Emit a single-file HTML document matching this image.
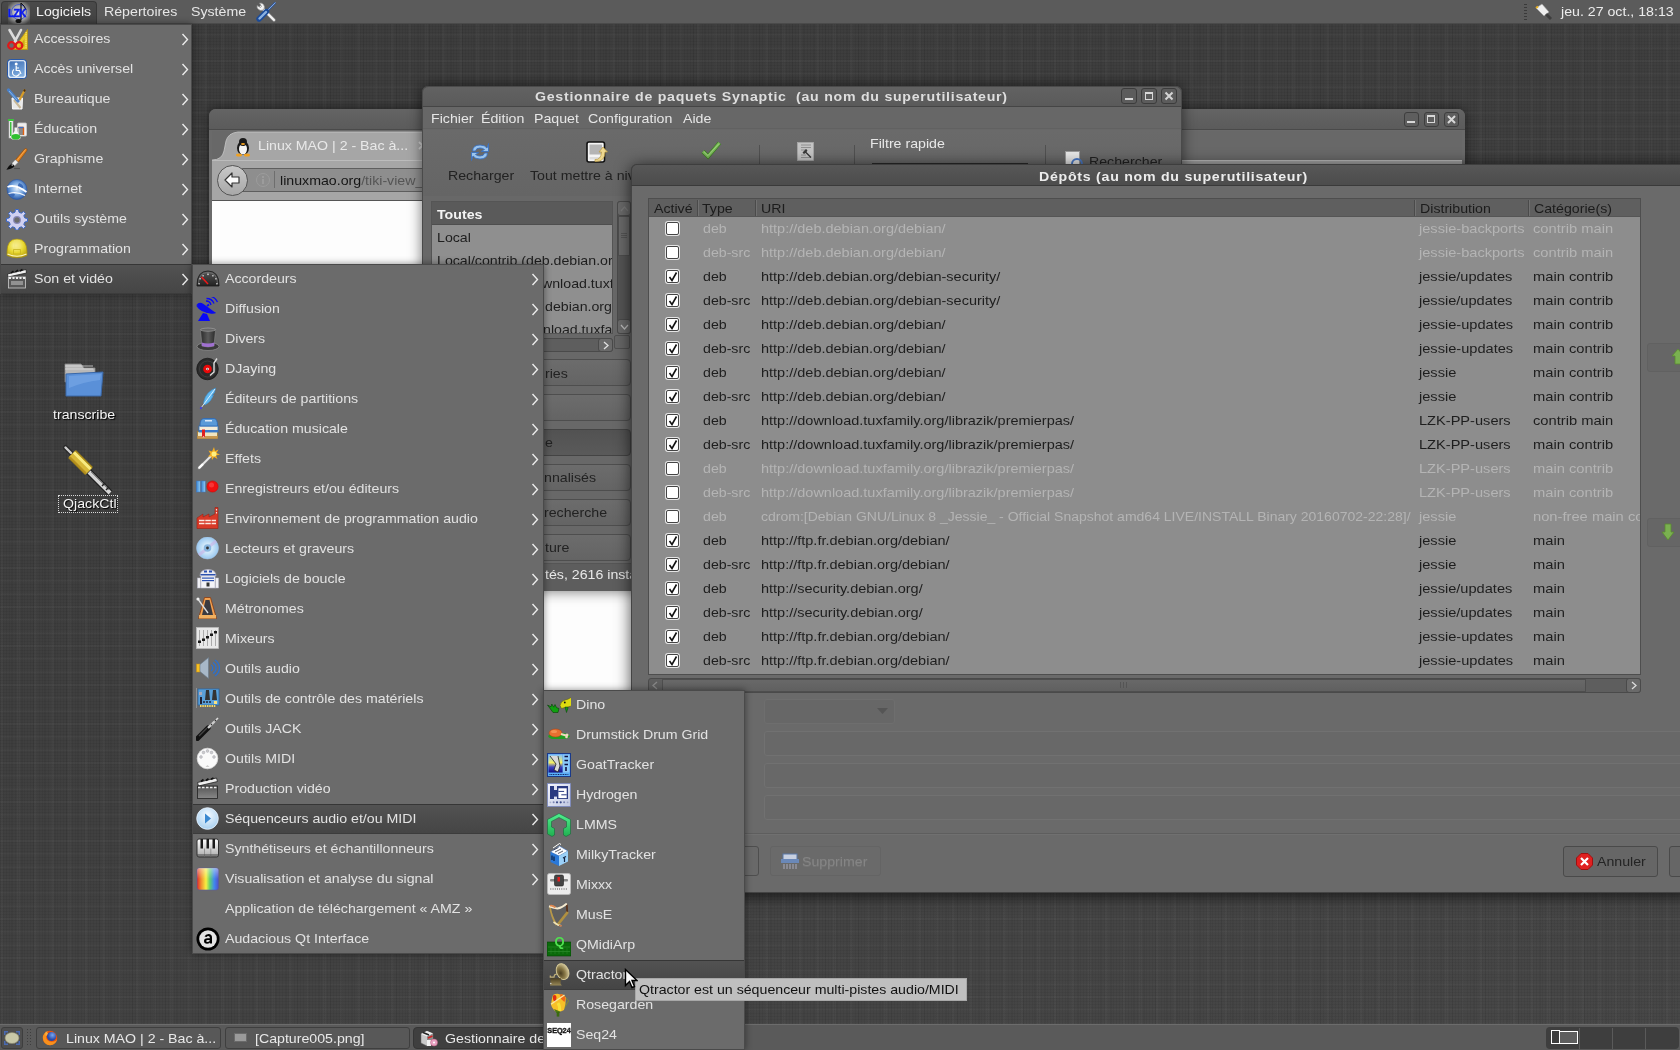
<!DOCTYPE html>
<html><head><meta charset="utf-8"><title>Desktop</title>
<style>
*{box-sizing:border-box;margin:0;padding:0}
html,body{width:1680px;height:1050px;overflow:hidden}
body{position:relative;font-family:"Liberation Sans",sans-serif;font-size:14.2px;color:#e8e8e8;
 background:
 repeating-linear-gradient(90deg,rgba(0,0,0,0.05) 0 1px,transparent 1px 3px),
 repeating-linear-gradient(0deg,rgba(0,0,0,0.05) 0 1px,transparent 1px 3px),
 repeating-linear-gradient(90deg,rgba(0,0,0,0.05) 0 1px,transparent 1px 11px),
 repeating-linear-gradient(0deg,rgba(255,255,255,0.025) 0 2px,transparent 2px 13px),
 repeating-linear-gradient(90deg,rgba(255,255,255,0.02) 0 3px,transparent 3px 17px),
 linear-gradient(160deg,#3c3c3c 0%,#3f3f3f 45%,#474747 100%)}
.a{position:absolute}
.t{position:absolute;white-space:nowrap;line-height:16px;font-size:13px;transform:scaleX(1.09);transform-origin:0 0;margin-top:1px}

</style></head><body><div id="root" style="position:absolute;left:0;top:0;width:1680px;height:1050px;will-change:transform">
<svg class="a" style="left:63px;top:362px" width="44" height="38" viewBox="0 0 44 38">
 <path d="M2 2 L18 2 L21 6 L32 6 L32 20 L2 20 Z" fill="#b8b8b8" stroke="#888" stroke-width="0.8"/>
 <path d="M2 4 L30 4 M2 7 L30 7" stroke="#ddd" stroke-width="0.8"/>
 <path d="M3 12 L40 10 L38 34 L3 34 Z" fill="#5a90d8" stroke="#3a68a8" stroke-width="1"/>
 <path d="M6 14 L38 12 L37 18 Q20 20 6 26 Z" fill="#7aaae8" opacity="0.6"/>
</svg>
<div class="t" style="left:53px;top:406px;color:#f4f4f4;text-shadow:1px 1px 1px #000">transcribe</div>
<svg class="a" style="left:62px;top:444px" width="52" height="52" viewBox="0 0 52 52">
 <path d="M3.5 3.5 L9 9" stroke="#2a2a2a" stroke-width="5" stroke-linecap="round"/><path d="M3.5 3.5 L9 9" stroke="#cfcfcf" stroke-width="2.4" stroke-linecap="round"/>
 <path d="M10 10 L27 27" stroke="#a88818" stroke-width="11"/><path d="M10 10 L27 27" stroke="#d8b838" stroke-width="8"/>
 <path d="M12 8.5 L28.5 25" stroke="#f8ea80" stroke-width="3"/><path d="M8 13 L24 29" stroke="#b89020" stroke-width="1.5"/>
 <path d="M27 28 L48 49" stroke="#1e1e1e" stroke-width="6.5"/><path d="M27 28 L48 49" stroke="#d4d4d4" stroke-width="4"/>
 <path d="M29 28 L47 46" stroke="#888" stroke-width="1"/><path d="M40 42 L43 39 M44 46 L47 43" stroke="#222" stroke-width="1.5"/>
</svg>
<div class="a" style="left:58px;top:495px;width:60px;height:18px;border:1px dotted #d8d8d8"></div>
<div class="t" style="left:63px;top:495px;color:#f4f4f4;text-shadow:1px 1px 1px #000">QjackCtl</div>

<div class="a" style="left:209px;top:109px;width:1256px;height:760px;background:#6a6a6a;border-radius:7px 7px 0 0;box-shadow:0 0 12px rgba(0,0,0,0.5)"></div>
<div class="a" style="left:209px;top:109px;width:1256px;height:21px;background:linear-gradient(#646464,#5b5b5b);border-radius:7px 7px 0 0;border-bottom:1px solid #4a4a4a"></div>
<div class="a" style="left:1404px;top:112px;width:15px;height:15px;border:1px solid #3e3e3e;border-radius:3px;background:#5e5e5e"></div>
<div class="a" style="left:1407px;top:121px;width:8px;height:2px;background:#d8d8d8"></div>
<div class="a" style="left:1424px;top:112px;width:15px;height:15px;border:1px solid #3e3e3e;border-radius:3px;background:#5e5e5e"></div>
<div class="a" style="left:1427px;top:115px;width:8px;height:8px;border:1.5px solid #d8d8d8;border-top-width:2px"></div>
<div class="a" style="left:1444px;top:112px;width:15px;height:15px;border:1px solid #3e3e3e;border-radius:3px;background:#5e5e5e"></div>
<svg class="a" style="left:1446px;top:114px" width="11" height="11" viewBox="0 0 11 11"><path d="M2 2 L9 9 M9 2 L2 9" stroke="#d8d8d8" stroke-width="2"/></svg>
<div class="a" style="left:212px;top:131px;width:1250px;height:29px;background:#686868"></div>
<svg class="a" style="left:212px;top:131px" width="400" height="30" viewBox="0 0 400 30"><path d="M0 29 Q10 29 12 20 L14 10 Q16 2 26 1 L400 1 L400 30 L0 30 Z" fill="#a6a6a6" stroke="#c8c8c8" stroke-width="0.8"/></svg>
<svg class="a" style="left:234px;top:137px" width="18" height="20" viewBox="0 0 18 20"><ellipse cx="9" cy="11" rx="6" ry="7" fill="#1a1a1a"/><ellipse cx="9" cy="12" rx="4" ry="5.5" fill="#f4f4f4"/><circle cx="9" cy="5" r="4" fill="#1a1a1a"/><ellipse cx="9" cy="7" rx="2" ry="1" fill="#f0a020"/><ellipse cx="5" cy="18" rx="3" ry="1.5" fill="#f0a020"/><ellipse cx="13" cy="18" rx="3" ry="1.5" fill="#f0a020"/></svg>
<div class="t" style="left:258px;top:137px;color:#e8e8e8">Linux MAO | 2 - Bac à...</div><svg class="a" style="left:418px;top:141px" width="9" height="9" viewBox="0 0 9 9"><path d="M1 1 L8 8 M8 1 L1 8" stroke="#d0d0d0" stroke-width="1.8"/></svg>
<div class="a" style="left:212px;top:160px;width:1250px;height:41px;background:#a6a6a6;border-top:1px solid #bcbcbc;border-bottom:1px solid #555"></div>
<div class="a" style="left:240px;top:168px;width:1000px;height:24px;background:#8e8e8e;border:1px solid #5e5e5e;border-radius:3px"></div>
<div class="a" style="left:217px;top:165px;width:31px;height:31px;border-radius:50%;background:linear-gradient(#c8c8c8,#a8a8a8);border:1px solid #555"></div>
<svg class="a" style="left:222px;top:170px" width="20" height="20" viewBox="0 0 20 20"><path d="M3 10 L10 3 L10 7 L17 7 L17 13 L10 13 L10 17 Z" fill="#fafafa" stroke="#333" stroke-width="1.2" stroke-linejoin="round"/></svg>
<div class="a" style="left:256px;top:173px;width:14px;height:14px;border-radius:50%;border:1px solid #9c9c9c"></div><div class="a" style="left:262px;top:176px;width:2px;height:2px;background:#9c9c9c"></div><div class="a" style="left:262px;top:179px;width:2px;height:5px;background:#9c9c9c"></div>
<div class="a" style="left:274px;top:171px;width:1px;height:17px;background:#6e6e6e"></div>
<div class="t" style="left:280px;top:172px;color:#161616">linuxmao.org<span style="color:#555">/tiki-view_</span></div>
<div class="a" style="left:212px;top:201px;width:1250px;height:665px;background:#fdfdfd"></div>

<div class="a" style="left:422px;top:86px;width:760px;height:505px;background:#686868;border-radius:6px 6px 0 0;border:1px solid #4a4a4a;box-shadow:0 0 14px rgba(0,0,0,0.55)"></div>
<div class="a" style="left:422px;top:86px;width:760px;height:21px;background:linear-gradient(#626262,#5a5a5a);border-radius:6px 6px 0 0;border:1px solid #4a4a4a;border-bottom:1px solid #454545"></div>
<div class="t" style="left:535px;top:88px;font-weight:bold;font-size:13px;letter-spacing:0.67px;color:#dedede">Gestionnaire de paquets Synaptic&nbsp; (au nom du superutilisateur)</div>
<div class="a" style="left:1121px;top:88px;width:16px;height:16px;border:1px solid #3c3c3c;border-radius:3px;background:#5c5c5c"></div>
<div class="a" style="left:1125px;top:98px;width:8px;height:2px;background:#d8d8d8"></div>
<div class="a" style="left:1141px;top:88px;width:16px;height:16px;border:1px solid #3c3c3c;border-radius:3px;background:#5c5c5c"></div>
<div class="a" style="left:1145px;top:92px;width:8px;height:8px;border:1.5px solid #d8d8d8;border-top-width:2px"></div>
<div class="a" style="left:1161px;top:88px;width:16px;height:16px;border:1px solid #3c3c3c;border-radius:3px;background:#5c5c5c"></div>
<svg class="a" style="left:1164px;top:91px" width="10" height="10" viewBox="0 0 10 10"><path d="M1.5 1.5 L8.5 8.5 M8.5 1.5 L1.5 8.5" stroke="#d4d4d4" stroke-width="2"/></svg>
<div class="a" style="left:423px;top:107px;width:758px;height:22px;background:#676767;border-bottom:1px solid #616161"></div>
<div class="t" style="left:431px;top:110px;color:#e6e6e6">Fichier</div>
<div class="t" style="left:481px;top:110px;color:#e6e6e6">Édition</div>
<div class="t" style="left:534px;top:110px;color:#e6e6e6">Paquet</div>
<div class="t" style="left:588px;top:110px;color:#e6e6e6">Configuration</div>
<div class="t" style="left:683px;top:110px;color:#e6e6e6">Aide</div>
<div class="a" style="left:423px;top:130px;width:758px;height:66px;background:linear-gradient(#6a6a6a,#656565)"></div>
<svg class="a" style="left:470px;top:142px" width="20" height="20" viewBox="0 0 20 20"><path d="M2.5 9 Q3 3 10 3 Q15 3 17 6 L18.5 1.5 L18.5 9.5 L11 9.5 L14.5 7.5 Q12.5 6 10 6 Q6 6 5.5 9 Z" fill="#9ac4ee" stroke="#3a70c0" stroke-width="0.9" stroke-linejoin="round"/><path d="M17.5 11 Q17 17 10 17 Q5 17 3 14 L1.5 18.5 L1.5 10.5 L9 10.5 L5.5 12.5 Q7.5 14 10 14 Q14 14 14.5 11 Z" fill="#9ac4ee" stroke="#3a70c0" stroke-width="0.9" stroke-linejoin="round"/></svg>
<div class="t" style="left:448px;top:167px;color:#222">Recharger</div>
<svg class="a" style="left:586px;top:141px" width="22" height="22" viewBox="0 0 22 22"><rect x="1" y="1" width="17.5" height="20" rx="2" fill="#f4f4f4" stroke="#111" stroke-width="1.6"/><rect x="3.5" y="3.5" width="12.5" height="10" fill="#b4b4b4"/><rect x="3.5" y="16" width="12.5" height="2.5" fill="#ddd"/><path d="M9 18.5 Q15 19 15.5 11 L13 11 L17 6 L21.5 11 L19 11 Q19 21 9 20.5 Z" fill="#eed890" stroke="#b89840" stroke-width="0.7"/></svg>
<div class="t" style="left:530px;top:167px;color:#222">Tout mettre à niveau</div>
<svg class="a" style="left:701px;top:141px" width="22" height="20" viewBox="0 0 22 20"><path d="M2 10.5 L7 15.5 L18.5 2" fill="none" stroke="#3a7a20" stroke-width="4.2" stroke-linejoin="miter"/><path d="M2 10.5 L7 15.5 L18.5 2" fill="none" stroke="#78b858" stroke-width="2.8"/><path d="M2.8 10.5 L7 14.6 L18 2.6" fill="none" stroke="#a8d888" stroke-width="0.8"/></svg>
<div class="a" style="left:759px;top:145px;width:1px;height:35px;background:#505050"></div>
<svg class="a" style="left:797px;top:142px" width="18" height="20" viewBox="0 0 18 20"><rect x="0.5" y="0.5" width="16" height="18" fill="#c4c4c4" stroke="#a8a8a8" stroke-width="0.8"/><path d="M4 3 L14 3 M4 5.5 L14 5.5 M4 8 L10 8 M4 13 L9 13 M4 15.5 L14 15.5" stroke="#8a8a8a" stroke-width="0.9"/><path d="M7 9 L9 7 L10.5 8.5 L9.5 10 L14.5 15 L13.5 16 L8.5 11 L7 12 L5.5 10.5 Z" fill="#3a3a3a"/></svg>
<div class="a" style="left:854px;top:145px;width:1px;height:35px;background:#505050"></div>
<div class="t" style="left:870px;top:135px;color:#e8e8e8">Filtre rapide</div>
<div class="a" style="left:872px;top:163px;width:156px;height:3px;background:#2a2a2a"></div>
<div class="a" style="left:1045px;top:145px;width:1px;height:35px;background:#505050"></div>
<div class="a" style="left:1065px;top:151px;width:15px;height:16px;background:#e8e8e8;border:1px solid #999"></div>
<div class="a" style="left:1071px;top:158px;width:12px;height:12px;border-radius:50%;border:2px solid #4a7ac8"></div>
<div class="t" style="left:1089px;top:153px;color:#222">Rechercher</div>
<div class="a" style="left:431px;top:201px;width:182px;height:133px;background:#8f8f8f;border:1px solid #555;overflow:hidden">
 <div class="a" style="left:0;top:0;width:181px;height:23px;background:#5a5a5a;border-bottom:1px solid #4e4e4e"></div>
 <div class="t" style="left:5px;top:4px;font-weight:bold;color:#f4f4f4">Toutes</div>
 <div class="t" style="left:5px;top:27px;color:#1e1e1e">Local</div>
 <div class="t" style="left:5px;top:50px;color:#1e1e1e">Local/contrib (deb.debian.org)</div>
 <div class="t" style="left:110px;top:73px;color:#1e1e1e">wnload.tuxfamily.org)</div>
 <div class="t" style="left:113px;top:96px;color:#1e1e1e">debian.org)</div>
 <div class="t" style="left:111px;top:119px;color:#1e1e1e">nload.tuxfamily.org)</div>
</div>
<div class="a" style="left:617px;top:201px;width:14px;height:133px;background:#555;border:1px solid #4a4a4a;border-radius:3px"></div>
<div class="a" style="left:617px;top:201px;width:14px;height:15px;background:#6a6a6a;border:1px solid #4a4a4a;border-radius:3px"></div>
<div class="a" style="left:618px;top:216px;width:12px;height:40px;background:#6a6a6a;border:1px solid #4e4e4e"></div>
<div class="a" style="left:617px;top:319px;width:14px;height:15px;background:#6a6a6a;border:1px solid #4a4a4a;border-radius:3px"></div>
<div class="a" style="left:431px;top:338px;width:182px;height:14px;background:#5e5e5e;border:1px solid #4a4a4a;border-radius:3px"></div>
<div class="a" style="left:598px;top:338px;width:15px;height:14px;background:#6a6a6a;border:1px solid #4a4a4a;border-radius:3px"></div>
<div class="a" style="left:614px;top:335px;width:16px;height:14px;background:#666;border:1px solid #505050;border-radius:2px"></div>
<svg class="a" style="left:602px;top:341px" width="8" height="9" viewBox="0 0 8 9"><path d="M2 1 L6 4.5 L2 8" fill="none" stroke="#e0e0e0" stroke-width="1.3"/></svg>
<svg class="a" style="left:620px;top:205px" width="9" height="7" viewBox="0 0 9 7"><path d="M1 6 L4.5 2 L8 6" fill="none" stroke="#7a7a7a" stroke-width="1.2"/></svg>
<svg class="a" style="left:620px;top:324px" width="9" height="7" viewBox="0 0 9 7"><path d="M1 1 L4.5 5 L8 1" fill="none" stroke="#bdbdbd" stroke-width="1.2"/></svg>
<div class="a" style="left:621px;top:233px;width:6px;height:5px;background:repeating-linear-gradient(#555 0 1px,transparent 1px 2px)"></div>
<div class="a" style="left:432px;top:359px;width:199px;height:27px;background:linear-gradient(#6c6c6c,#646464);border:1px solid #4e4e4e;border-radius:4px"></div>
<div class="t" style="left:545px;top:365px;color:#222">ries</div>
<div class="a" style="left:432px;top:394px;width:199px;height:27px;background:linear-gradient(#6c6c6c,#646464);border:1px solid #4e4e4e;border-radius:4px"></div>
<div class="a" style="left:432px;top:429px;width:199px;height:27px;background:linear-gradient(#525252,#5a5a5a);border:1px solid #444;border-radius:4px"></div>
<div class="t" style="left:545px;top:434px;color:#222">e</div>
<div class="a" style="left:432px;top:464px;width:199px;height:27px;background:linear-gradient(#6c6c6c,#646464);border:1px solid #4e4e4e;border-radius:4px"></div>
<div class="t" style="left:544px;top:469px;color:#222">nnalisés</div>
<div class="a" style="left:432px;top:499px;width:199px;height:27px;background:linear-gradient(#6c6c6c,#646464);border:1px solid #4e4e4e;border-radius:4px"></div>
<div class="t" style="left:544px;top:504px;color:#222">recherche</div>
<div class="a" style="left:432px;top:534px;width:199px;height:27px;background:linear-gradient(#6c6c6c,#646464);border:1px solid #4e4e4e;border-radius:4px"></div>
<div class="t" style="left:545px;top:539px;color:#222">ture</div>
<div class="a" style="left:423px;top:563px;width:208px;height:28px;background:#5d5d5d;border-top:1px solid #555"></div>
<div class="t" style="left:545px;top:566px;color:#e8e8e8">tés, 2616 installés</div>

<div class="a" style="left:631px;top:164px;width:1060px;height:729px;background:#6a6a6a;border:1px solid #444;border-radius:6px 0 0 0;box-shadow:0 2px 16px rgba(0,0,0,0.7)"></div>
<div class="a" style="left:631px;top:164px;width:1060px;height:22px;background:linear-gradient(#575757,#4c4c4c);border:1px solid #3e3e3e;border-bottom:1px solid #3a3a3a;border-radius:6px 0 0 0"></div>
<div class="t" style="left:1039px;top:168px;font-weight:bold;font-size:13px;letter-spacing:0.67px;color:#ececec">Dépôts (au nom du superutilisateur)</div>
<div class="a" style="left:648px;top:198px;width:993px;height:477px;background:#8d8d8d;border:1px solid #4e4e4e;overflow:hidden">
<div class="a" style="left:0;top:0;width:993px;height:18px;background:#5f5f5f;border-bottom:1px solid #555"></div>
<div class="a" style="left:48px;top:1px;width:2px;height:16px;border-left:1px solid #4a4a4a;border-right:1px solid #707070"></div>
<div class="a" style="left:106px;top:1px;width:2px;height:16px;border-left:1px solid #4a4a4a;border-right:1px solid #707070"></div>
<div class="a" style="left:765px;top:1px;width:2px;height:16px;border-left:1px solid #4a4a4a;border-right:1px solid #707070"></div>
<div class="a" style="left:879px;top:1px;width:2px;height:16px;border-left:1px solid #4a4a4a;border-right:1px solid #707070"></div>
<div class="t" style="left:5px;top:1px;color:#1c1c1c">Activé</div>
<div class="t" style="left:53px;top:1px;color:#1c1c1c">Type</div>
<div class="t" style="left:112px;top:1px;color:#1c1c1c">URI</div>
<div class="t" style="left:771px;top:1px;color:#1c1c1c">Distribution</div>
<div class="t" style="left:885px;top:1px;color:#1c1c1c">Catégorie(s)</div>
<div class="a" style="left:17px;top:23px;width:13px;height:13px;background:#fff;border:1px solid #444;border-radius:2px;box-shadow:0 0 0 1px #e4e4e4"></div>
<div class="t" style="left:54px;top:21px;color:#b4b4b4">deb</div>
<div class="t" style="left:112px;top:21px;color:#b4b4b4;font-size:13.3px">http://deb.debian.org/debian/</div>
<div class="a" style="left:765px;top:18px;width:228px;height:24px;background:#8d8d8d"></div>
<div class="t" style="left:770px;top:21px;color:#b4b4b4;font-size:13.4px">jessie-backports</div>
<div class="t" style="left:884px;top:21px;color:#b4b4b4;font-size:13.5px">contrib main</div>
<div class="a" style="left:17px;top:47px;width:13px;height:13px;background:#fff;border:1px solid #444;border-radius:2px;box-shadow:0 0 0 1px #e4e4e4"></div>
<div class="t" style="left:54px;top:45px;color:#b4b4b4">deb-src</div>
<div class="t" style="left:112px;top:45px;color:#b4b4b4;font-size:13.3px">http://deb.debian.org/debian/</div>
<div class="a" style="left:765px;top:42px;width:228px;height:24px;background:#8d8d8d"></div>
<div class="t" style="left:770px;top:45px;color:#b4b4b4;font-size:13.4px">jessie-backports</div>
<div class="t" style="left:884px;top:45px;color:#b4b4b4;font-size:13.5px">contrib main</div>
<div class="a" style="left:17px;top:71px;width:13px;height:13px;background:#fff;border:1px solid #444;border-radius:2px;box-shadow:0 0 0 1px #e4e4e4"><svg class="a" style="left:1px;top:1px" width="10" height="10" viewBox="0 0 10 10"><path d="M1.5 5 L4 8.5 L8.5 0.5" fill="none" stroke="#111" stroke-width="1.6"/></svg></div>
<div class="t" style="left:54px;top:69px;color:#1e1e1e">deb</div>
<div class="t" style="left:112px;top:69px;color:#1e1e1e;font-size:13.3px">http://deb.debian.org/debian-security/</div>
<div class="a" style="left:765px;top:66px;width:228px;height:24px;background:#8d8d8d"></div>
<div class="t" style="left:770px;top:69px;color:#1e1e1e;font-size:13.4px">jessie/updates</div>
<div class="t" style="left:884px;top:69px;color:#1e1e1e;font-size:13.5px">main contrib</div>
<div class="a" style="left:17px;top:95px;width:13px;height:13px;background:#fff;border:1px solid #444;border-radius:2px;box-shadow:0 0 0 1px #e4e4e4"><svg class="a" style="left:1px;top:1px" width="10" height="10" viewBox="0 0 10 10"><path d="M1.5 5 L4 8.5 L8.5 0.5" fill="none" stroke="#111" stroke-width="1.6"/></svg></div>
<div class="t" style="left:54px;top:93px;color:#1e1e1e">deb-src</div>
<div class="t" style="left:112px;top:93px;color:#1e1e1e;font-size:13.3px">http://deb.debian.org/debian-security/</div>
<div class="a" style="left:765px;top:90px;width:228px;height:24px;background:#8d8d8d"></div>
<div class="t" style="left:770px;top:93px;color:#1e1e1e;font-size:13.4px">jessie/updates</div>
<div class="t" style="left:884px;top:93px;color:#1e1e1e;font-size:13.5px">main contrib</div>
<div class="a" style="left:17px;top:119px;width:13px;height:13px;background:#fff;border:1px solid #444;border-radius:2px;box-shadow:0 0 0 1px #e4e4e4"><svg class="a" style="left:1px;top:1px" width="10" height="10" viewBox="0 0 10 10"><path d="M1.5 5 L4 8.5 L8.5 0.5" fill="none" stroke="#111" stroke-width="1.6"/></svg></div>
<div class="t" style="left:54px;top:117px;color:#1e1e1e">deb</div>
<div class="t" style="left:112px;top:117px;color:#1e1e1e;font-size:13.3px">http://deb.debian.org/debian/</div>
<div class="a" style="left:765px;top:114px;width:228px;height:24px;background:#8d8d8d"></div>
<div class="t" style="left:770px;top:117px;color:#1e1e1e;font-size:13.4px">jessie-updates</div>
<div class="t" style="left:884px;top:117px;color:#1e1e1e;font-size:13.5px">main contrib</div>
<div class="a" style="left:17px;top:143px;width:13px;height:13px;background:#fff;border:1px solid #444;border-radius:2px;box-shadow:0 0 0 1px #e4e4e4"><svg class="a" style="left:1px;top:1px" width="10" height="10" viewBox="0 0 10 10"><path d="M1.5 5 L4 8.5 L8.5 0.5" fill="none" stroke="#111" stroke-width="1.6"/></svg></div>
<div class="t" style="left:54px;top:141px;color:#1e1e1e">deb-src</div>
<div class="t" style="left:112px;top:141px;color:#1e1e1e;font-size:13.3px">http://deb.debian.org/debian/</div>
<div class="a" style="left:765px;top:138px;width:228px;height:24px;background:#8d8d8d"></div>
<div class="t" style="left:770px;top:141px;color:#1e1e1e;font-size:13.4px">jessie-updates</div>
<div class="t" style="left:884px;top:141px;color:#1e1e1e;font-size:13.5px">main contrib</div>
<div class="a" style="left:17px;top:167px;width:13px;height:13px;background:#fff;border:1px solid #444;border-radius:2px;box-shadow:0 0 0 1px #e4e4e4"><svg class="a" style="left:1px;top:1px" width="10" height="10" viewBox="0 0 10 10"><path d="M1.5 5 L4 8.5 L8.5 0.5" fill="none" stroke="#111" stroke-width="1.6"/></svg></div>
<div class="t" style="left:54px;top:165px;color:#1e1e1e">deb</div>
<div class="t" style="left:112px;top:165px;color:#1e1e1e;font-size:13.3px">http://deb.debian.org/debian/</div>
<div class="a" style="left:765px;top:162px;width:228px;height:24px;background:#8d8d8d"></div>
<div class="t" style="left:770px;top:165px;color:#1e1e1e;font-size:13.4px">jessie</div>
<div class="t" style="left:884px;top:165px;color:#1e1e1e;font-size:13.5px">main contrib</div>
<div class="a" style="left:17px;top:191px;width:13px;height:13px;background:#fff;border:1px solid #444;border-radius:2px;box-shadow:0 0 0 1px #e4e4e4"><svg class="a" style="left:1px;top:1px" width="10" height="10" viewBox="0 0 10 10"><path d="M1.5 5 L4 8.5 L8.5 0.5" fill="none" stroke="#111" stroke-width="1.6"/></svg></div>
<div class="t" style="left:54px;top:189px;color:#1e1e1e">deb-src</div>
<div class="t" style="left:112px;top:189px;color:#1e1e1e;font-size:13.3px">http://deb.debian.org/debian/</div>
<div class="a" style="left:765px;top:186px;width:228px;height:24px;background:#8d8d8d"></div>
<div class="t" style="left:770px;top:189px;color:#1e1e1e;font-size:13.4px">jessie</div>
<div class="t" style="left:884px;top:189px;color:#1e1e1e;font-size:13.5px">main contrib</div>
<div class="a" style="left:17px;top:215px;width:13px;height:13px;background:#fff;border:1px solid #444;border-radius:2px;box-shadow:0 0 0 1px #e4e4e4"><svg class="a" style="left:1px;top:1px" width="10" height="10" viewBox="0 0 10 10"><path d="M1.5 5 L4 8.5 L8.5 0.5" fill="none" stroke="#111" stroke-width="1.6"/></svg></div>
<div class="t" style="left:54px;top:213px;color:#1e1e1e">deb</div>
<div class="t" style="left:112px;top:213px;color:#1e1e1e;font-size:13.3px">http://download.tuxfamily.org/librazik/premierpas/</div>
<div class="a" style="left:765px;top:210px;width:228px;height:24px;background:#8d8d8d"></div>
<div class="t" style="left:770px;top:213px;color:#1e1e1e;font-size:13.4px">LZK-PP-users</div>
<div class="t" style="left:884px;top:213px;color:#1e1e1e;font-size:13.5px">contrib main</div>
<div class="a" style="left:17px;top:239px;width:13px;height:13px;background:#fff;border:1px solid #444;border-radius:2px;box-shadow:0 0 0 1px #e4e4e4"><svg class="a" style="left:1px;top:1px" width="10" height="10" viewBox="0 0 10 10"><path d="M1.5 5 L4 8.5 L8.5 0.5" fill="none" stroke="#111" stroke-width="1.6"/></svg></div>
<div class="t" style="left:54px;top:237px;color:#1e1e1e">deb-src</div>
<div class="t" style="left:112px;top:237px;color:#1e1e1e;font-size:13.3px">http://download.tuxfamily.org/librazik/premierpas/</div>
<div class="a" style="left:765px;top:234px;width:228px;height:24px;background:#8d8d8d"></div>
<div class="t" style="left:770px;top:237px;color:#1e1e1e;font-size:13.4px">LZK-PP-users</div>
<div class="t" style="left:884px;top:237px;color:#1e1e1e;font-size:13.5px">main contrib</div>
<div class="a" style="left:17px;top:263px;width:13px;height:13px;background:#fff;border:1px solid #444;border-radius:2px;box-shadow:0 0 0 1px #e4e4e4"></div>
<div class="t" style="left:54px;top:261px;color:#b4b4b4">deb</div>
<div class="t" style="left:112px;top:261px;color:#b4b4b4;font-size:13.3px">http://download.tuxfamily.org/librazik/premierpas/</div>
<div class="a" style="left:765px;top:258px;width:228px;height:24px;background:#8d8d8d"></div>
<div class="t" style="left:770px;top:261px;color:#b4b4b4;font-size:13.4px">LZK-PP-users</div>
<div class="t" style="left:884px;top:261px;color:#b4b4b4;font-size:13.5px">main contrib</div>
<div class="a" style="left:17px;top:287px;width:13px;height:13px;background:#fff;border:1px solid #444;border-radius:2px;box-shadow:0 0 0 1px #e4e4e4"></div>
<div class="t" style="left:54px;top:285px;color:#b4b4b4">deb-src</div>
<div class="t" style="left:112px;top:285px;color:#b4b4b4;font-size:13.3px">http://download.tuxfamily.org/librazik/premierpas/</div>
<div class="a" style="left:765px;top:282px;width:228px;height:24px;background:#8d8d8d"></div>
<div class="t" style="left:770px;top:285px;color:#b4b4b4;font-size:13.4px">LZK-PP-users</div>
<div class="t" style="left:884px;top:285px;color:#b4b4b4;font-size:13.5px">main contrib</div>
<div class="a" style="left:17px;top:311px;width:13px;height:13px;background:#fff;border:1px solid #444;border-radius:2px;box-shadow:0 0 0 1px #e4e4e4"></div>
<div class="t" style="left:54px;top:309px;color:#b4b4b4">deb</div>
<div class="t" style="left:112px;top:309px;color:#b4b4b4;font-size:12.85px">cdrom:[Debian GNU/Linux 8 _Jessie_ - Official Snapshot amd64 LIVE/INSTALL Binary 20160702-22:28]/</div>
<div class="a" style="left:765px;top:306px;width:228px;height:24px;background:#8d8d8d"></div>
<div class="t" style="left:770px;top:309px;color:#b4b4b4;font-size:13.4px">jessie</div>
<div class="t" style="left:884px;top:309px;color:#b4b4b4;font-size:13.5px">non-free main contrib</div>
<div class="a" style="left:17px;top:335px;width:13px;height:13px;background:#fff;border:1px solid #444;border-radius:2px;box-shadow:0 0 0 1px #e4e4e4"><svg class="a" style="left:1px;top:1px" width="10" height="10" viewBox="0 0 10 10"><path d="M1.5 5 L4 8.5 L8.5 0.5" fill="none" stroke="#111" stroke-width="1.6"/></svg></div>
<div class="t" style="left:54px;top:333px;color:#1e1e1e">deb</div>
<div class="t" style="left:112px;top:333px;color:#1e1e1e;font-size:13.3px">http://ftp.fr.debian.org/debian/</div>
<div class="a" style="left:765px;top:330px;width:228px;height:24px;background:#8d8d8d"></div>
<div class="t" style="left:770px;top:333px;color:#1e1e1e;font-size:13.4px">jessie</div>
<div class="t" style="left:884px;top:333px;color:#1e1e1e;font-size:13.5px">main</div>
<div class="a" style="left:17px;top:359px;width:13px;height:13px;background:#fff;border:1px solid #444;border-radius:2px;box-shadow:0 0 0 1px #e4e4e4"><svg class="a" style="left:1px;top:1px" width="10" height="10" viewBox="0 0 10 10"><path d="M1.5 5 L4 8.5 L8.5 0.5" fill="none" stroke="#111" stroke-width="1.6"/></svg></div>
<div class="t" style="left:54px;top:357px;color:#1e1e1e">deb-src</div>
<div class="t" style="left:112px;top:357px;color:#1e1e1e;font-size:13.3px">http://ftp.fr.debian.org/debian/</div>
<div class="a" style="left:765px;top:354px;width:228px;height:24px;background:#8d8d8d"></div>
<div class="t" style="left:770px;top:357px;color:#1e1e1e;font-size:13.4px">jessie</div>
<div class="t" style="left:884px;top:357px;color:#1e1e1e;font-size:13.5px">main</div>
<div class="a" style="left:17px;top:383px;width:13px;height:13px;background:#fff;border:1px solid #444;border-radius:2px;box-shadow:0 0 0 1px #e4e4e4"><svg class="a" style="left:1px;top:1px" width="10" height="10" viewBox="0 0 10 10"><path d="M1.5 5 L4 8.5 L8.5 0.5" fill="none" stroke="#111" stroke-width="1.6"/></svg></div>
<div class="t" style="left:54px;top:381px;color:#1e1e1e">deb</div>
<div class="t" style="left:112px;top:381px;color:#1e1e1e;font-size:13.3px">http://security.debian.org/</div>
<div class="a" style="left:765px;top:378px;width:228px;height:24px;background:#8d8d8d"></div>
<div class="t" style="left:770px;top:381px;color:#1e1e1e;font-size:13.4px">jessie/updates</div>
<div class="t" style="left:884px;top:381px;color:#1e1e1e;font-size:13.5px">main</div>
<div class="a" style="left:17px;top:407px;width:13px;height:13px;background:#fff;border:1px solid #444;border-radius:2px;box-shadow:0 0 0 1px #e4e4e4"><svg class="a" style="left:1px;top:1px" width="10" height="10" viewBox="0 0 10 10"><path d="M1.5 5 L4 8.5 L8.5 0.5" fill="none" stroke="#111" stroke-width="1.6"/></svg></div>
<div class="t" style="left:54px;top:405px;color:#1e1e1e">deb-src</div>
<div class="t" style="left:112px;top:405px;color:#1e1e1e;font-size:13.3px">http://security.debian.org/</div>
<div class="a" style="left:765px;top:402px;width:228px;height:24px;background:#8d8d8d"></div>
<div class="t" style="left:770px;top:405px;color:#1e1e1e;font-size:13.4px">jessie/updates</div>
<div class="t" style="left:884px;top:405px;color:#1e1e1e;font-size:13.5px">main</div>
<div class="a" style="left:17px;top:431px;width:13px;height:13px;background:#fff;border:1px solid #444;border-radius:2px;box-shadow:0 0 0 1px #e4e4e4"><svg class="a" style="left:1px;top:1px" width="10" height="10" viewBox="0 0 10 10"><path d="M1.5 5 L4 8.5 L8.5 0.5" fill="none" stroke="#111" stroke-width="1.6"/></svg></div>
<div class="t" style="left:54px;top:429px;color:#1e1e1e">deb</div>
<div class="t" style="left:112px;top:429px;color:#1e1e1e;font-size:13.3px">http://ftp.fr.debian.org/debian/</div>
<div class="a" style="left:765px;top:426px;width:228px;height:24px;background:#8d8d8d"></div>
<div class="t" style="left:770px;top:429px;color:#1e1e1e;font-size:13.4px">jessie-updates</div>
<div class="t" style="left:884px;top:429px;color:#1e1e1e;font-size:13.5px">main</div>
<div class="a" style="left:17px;top:455px;width:13px;height:13px;background:#fff;border:1px solid #444;border-radius:2px;box-shadow:0 0 0 1px #e4e4e4"><svg class="a" style="left:1px;top:1px" width="10" height="10" viewBox="0 0 10 10"><path d="M1.5 5 L4 8.5 L8.5 0.5" fill="none" stroke="#111" stroke-width="1.6"/></svg></div>
<div class="t" style="left:54px;top:453px;color:#1e1e1e">deb-src</div>
<div class="t" style="left:112px;top:453px;color:#1e1e1e;font-size:13.3px">http://ftp.fr.debian.org/debian/</div>
<div class="a" style="left:765px;top:450px;width:228px;height:24px;background:#8d8d8d"></div>
<div class="t" style="left:770px;top:453px;color:#1e1e1e;font-size:13.4px">jessie-updates</div>
<div class="t" style="left:884px;top:453px;color:#1e1e1e;font-size:13.5px">main</div>
</div>
<div class="a" style="left:648px;top:678px;width:993px;height:15px;background:#5e5e5e;border:1px solid #4a4a4a;border-radius:3px"></div>
<div class="a" style="left:662px;top:679px;width:924px;height:13px;background:linear-gradient(#686868,#606060);border:1px solid #4e4e4e"></div>
<div class="a" style="left:1120px;top:682px;width:7px;height:6px;background:repeating-linear-gradient(90deg,#555 0 1px,transparent 1px 3px)"></div>
<div class="a" style="left:1626px;top:678px;width:15px;height:15px;background:#6a6a6a;border:1px solid #4a4a4a;border-radius:3px"></div>
<svg class="a" style="left:1630px;top:681px" width="8" height="9" viewBox="0 0 8 9"><path d="M2 1 L6 4.5 L2 8" fill="none" stroke="#ddd" stroke-width="1.3"/></svg>
<svg class="a" style="left:651px;top:681px" width="8" height="9" viewBox="0 0 8 9"><path d="M6 1 L2 4.5 L6 8" fill="none" stroke="#888" stroke-width="1.3"/></svg>
<div class="a" style="left:1647px;top:343px;width:40px;height:29px;background:#666;border:1px solid #616161;border-radius:3px"></div>
<svg class="a" style="left:1671px;top:348px" width="14" height="18" viewBox="0 0 14 18"><path d="M7 1 L13 8 L10 8 L10 16 L4 16 L4 8 L1 8 Z" fill="#7ab050" stroke="#5a8a30" stroke-width="0.8"/></svg>
<div class="a" style="left:1647px;top:518px;width:40px;height:29px;background:#666;border:1px solid #616161;border-radius:3px"></div>
<svg class="a" style="left:1661px;top:523px" width="14" height="18" viewBox="0 0 14 18"><path d="M4 1 L10 1 L10 9 L13 9 L7 17 L1 9 L4 9 Z" fill="#7ab050" stroke="#5a8a30" stroke-width="0.8"/></svg>
<div class="a" style="left:764px;top:699px;width:131px;height:25px;background:#676767;border:1px solid #6e6e6e;border-radius:3px"></div>
<svg class="a" style="left:877px;top:708px" width="11" height="7" viewBox="0 0 11 7"><path d="M0 0 L11 0 L5.5 6 Z" fill="#555"/></svg>
<div class="a" style="left:764px;top:731px;width:930px;height:25px;background:#686868;border:1px solid #717171;border-radius:3px"></div>
<div class="a" style="left:764px;top:763px;width:930px;height:25px;background:#686868;border:1px solid #717171;border-radius:3px"></div>
<div class="a" style="left:764px;top:795px;width:930px;height:25px;background:#686868;border:1px solid #717171;border-radius:3px"></div>
<div class="a" style="left:632px;top:833px;width:1050px;height:1px;background:#5e5e5e"></div>
<div class="a" style="left:632px;top:834px;width:1050px;height:1px;background:#707070"></div>
<div class="a" style="left:700px;top:846px;width:59px;height:30px;background:#696969;border:1px solid #4e4e4e;border-radius:3px"></div>
<div class="a" style="left:770px;top:846px;width:111px;height:30px;background:#6a6a6a;border:1px solid #646464;border-radius:3px"></div>
<svg class="a" style="left:781px;top:853px" width="18" height="17" viewBox="0 0 18 17"><rect x="2" y="1" width="14" height="8" fill="#c8d0e0" stroke="#5a78a8" stroke-width="1"/><rect x="0" y="6" width="18" height="4" fill="#6a88b8"/><path d="M3 11 L3 16 M6 11 L6 16 M9 11 L9 16 M12 11 L12 16 M15 11 L15 16" stroke="#aab" stroke-width="1"/></svg>
<div class="t" style="left:802px;top:853px;color:#858585;text-shadow:0 1px 0 #757575">Supprimer</div>
<div class="a" style="left:1563px;top:846px;width:95px;height:31px;background:#666;border:1px solid #4a4a4a;border-radius:3px"></div>
<svg class="a" style="left:1576px;top:853px" width="17" height="17" viewBox="0 0 17 17"><path d="M5 0.5 L12 0.5 L16.5 5 L16.5 12 L12 16.5 L5 16.5 L0.5 12 L0.5 5 Z" fill="#e02020" stroke="#a01010" stroke-width="1"/><path d="M5 5 L12 12 M12 5 L5 12" stroke="#fff" stroke-width="2.2"/></svg>
<div class="t" style="left:1597px;top:853px;color:#242424">Annuler</div>
<div class="a" style="left:1669px;top:846px;width:40px;height:31px;background:#666;border:1px solid #4a4a4a;border-radius:3px"></div>
<div class="a" style="left:0;top:0;width:1680px;height:24px;background:#5b5b5b;border-bottom:1px solid #4a4a4a"></div>
<div class="a" style="left:1px;top:1px;width:96px;height:23px;background:linear-gradient(#4a4a4a,#424242);border:1px solid #383838;border-bottom:none;border-radius:4px 4px 0 0"></div>
<svg class="a" style="left:8px;top:2px" width="22" height="22" viewBox="0 0 22 22"><defs><radialGradient id="glzk" cx="0.5" cy="0.5" r="0.6"><stop offset="0" stop-color="#e8e8e8"/><stop offset="0.55" stop-color="#a8a8a8"/><stop offset="1" stop-color="#505050"/></radialGradient></defs>
<rect x="0" y="0" width="22" height="22" fill="url(#glzk)"/><circle cx="11" cy="10" r="7.5" fill="none" stroke="#3a50d0" stroke-width="1" opacity="0.8"/>
<path d="M13 1 L13 18" stroke="#111" stroke-width="1.2"/><ellipse cx="10.5" cy="19" rx="3" ry="2" fill="#111"/><path d="M13 1 Q17 4 18 8" fill="none" stroke="#111" stroke-width="1"/>
<text x="0" y="15" font-family="Liberation Sans" font-weight="bold" font-size="10" fill="#0a1af0" stroke="#0a1af0" stroke-width="0.5" letter-spacing="-0.6">LZK</text></svg>
<div class="t" style="left:36px;top:3px;color:#f2f2f2">Logiciels</div>
<div class="t" style="left:104px;top:3px;color:#e6e6e6">Répertoires</div>
<div class="t" style="left:191px;top:3px;color:#e6e6e6">Système</div>
<svg class="a" style="left:255px;top:1px" width="22" height="22" viewBox="0 0 22 22">
<path d="M6 6 L19 19" stroke="#888" stroke-width="3.6" stroke-linecap="round"/><path d="M6 6 L19 19" stroke="#f4f4f4" stroke-width="2.2" stroke-linecap="round"/>
<path d="M2 4.5 A4.2 4.2 0 0 0 8 9 L9 8 A4.2 4.2 0 0 0 4.5 2 L6.5 5.5 L5.5 6.5 Z" fill="#f4f4f4" stroke="#888" stroke-width="0.7"/>
<path d="M20.5 1.5 L11 11" stroke="#2a5aa8" stroke-width="1.8"/><path d="M20.5 1.5 L11 11" stroke="#c8d8f0" stroke-width="0.6"/>
<path d="M11.5 10.5 L4 18" stroke="#1a4a98" stroke-width="5.4" stroke-linecap="round"/><path d="M11 11 L4.5 17.5" stroke="#8ab0e0" stroke-width="2.4" stroke-linecap="round"/></svg>
<div class="a" style="left:1524px;top:4px;width:3px;height:16px;background:repeating-linear-gradient(#3a3a3a 0 1px,transparent 1px 3px)"></div>
<svg class="a" style="left:1533px;top:2px" width="22" height="20" viewBox="0 0 22 20">
 <path d="M3 6 L9 2 L16 10 L11 14 Z" fill="#eee" stroke="#999" stroke-width="0.6"/><path d="M3 6 L5 4.5" stroke="#e8b020" stroke-width="2"/><path d="M13 12 L18 17" stroke="#2a2a2a" stroke-width="3" opacity="0.6"/>
</svg>
<div class="t" style="left:1561px;top:3px;color:#ececec">jeu. 27 oct., 18:13</div>

<div class="a" style="left:0;top:1024px;width:1680px;height:26px;background:#5a5a5a;border-top:1px solid #6c6c6c"></div>
<div class="a" style="left:1px;top:1027px;width:22px;height:22px;background:#4e4e4e;border:1px solid #3e3e3e;border-radius:3px"></div>
<svg class="a" style="left:3px;top:1030px" width="18" height="16" viewBox="0 0 18 16"><path d="M1 1 L5 1 L5 2.5 L2.5 2.5 L2.5 5 L1 5 Z M17 1 L13 1 L13 2.5 L15.5 2.5 L15.5 5 L17 5 Z M1 15 L5 15 L5 13.5 L2.5 13.5 L2.5 11 L1 11 Z M17 15 L13 15 L13 13.5 L15.5 13.5 L15.5 11 L17 11 Z" fill="#4a6ab0"/><ellipse cx="9" cy="8" rx="7" ry="5.5" fill="#c8c8a8" stroke="#888870" stroke-width="0.6"/></svg>
<div class="a" style="left:27px;top:1029px;width:4px;height:18px;background:repeating-linear-gradient(90deg,transparent 0 0px,transparent 0 0),repeating-linear-gradient(#3e3e3e 0 1px,transparent 1px 3px);-webkit-mask:repeating-linear-gradient(90deg,#000 0 1px,transparent 1px 3px)"></div>
<div class="a" style="left:36px;top:1027px;width:185px;height:22px;background:#585858;border:1px solid #3f3f3f;border-radius:3px"></div>
<svg class="a" style="left:42px;top:1030px" width="16" height="16" viewBox="0 0 16 16"><defs><radialGradient id="gff" cx="0.6" cy="0.35" r="0.5"><stop offset="0" stop-color="#7aa8f0"/><stop offset="1" stop-color="#2a4aa8"/></radialGradient></defs><circle cx="8" cy="8" r="7.2" fill="#e8500c"/><circle cx="9.5" cy="6.5" r="4.6" fill="url(#gff)"/><path d="M0.8 8 Q1.5 15 8 15.2 Q14.5 15 15.2 8.5 Q14 12 9.5 11.8 Q4.5 11.5 4 6.5 Q4 3 6.5 1 Q1 2.5 0.8 8 Z" fill="#f8901c"/><path d="M4 6.5 Q2.5 3.5 4 1.2 L6 3.5 Z" fill="#f8b040"/></svg>
<div class="t" style="left:66px;top:1030px;color:#e8e8e8">Linux MAO | 2 - Bac à...</div>
<div class="a" style="left:225px;top:1027px;width:185px;height:22px;background:#585858;border:1px solid #3f3f3f;border-radius:3px"></div>
<div class="a" style="left:234px;top:1033px;width:13px;height:9px;background:#9a9a9a;border:1px solid #6a6a6a"></div>
<div class="t" style="left:255px;top:1030px;color:#e8e8e8">[Capture005.png]</div>
<div class="a" style="left:413px;top:1027px;width:200px;height:22px;background:#3f3f3f;border:1px solid #353535;border-radius:4px"></div>
<svg class="a" style="left:420px;top:1030px" width="18" height="17" viewBox="0 0 18 17"><path d="M1 4 L7 1 L13 3.5 L13 13 L7 16 L1 13 Z" fill="#c8c8c8" stroke="#666" stroke-width="0.5"/><path d="M1 4 L7 6.5 L13 3.5 L7 1 Z" fill="#eee"/><path d="M7 6.5 L7 16 L13 13 L13 3.5 Z" fill="#8a8a8a"/><path d="M3 2.5 L9 5" stroke="#222" stroke-width="1.4"/><path d="M8 8 L12.5 6" stroke="#d02020" stroke-width="1.4"/><rect x="7" y="10" width="4" height="6" fill="#f0f0f0"/><circle cx="14" cy="12.5" r="3.5" fill="#e8a0c0" stroke="#c06080" stroke-width="0.5"/><circle cx="14" cy="12.5" r="1" fill="#fff"/></svg>
<div class="t" style="left:445px;top:1030px;color:#e8e8e8">Gestionnaire de paquets</div>
<div class="a" style="left:1546px;top:1027px;width:133px;height:22px;background:#3e3e3e;border-radius:4px"></div>
<div class="a" style="left:1579px;top:1028px;width:1px;height:21px;background:#5a5a5a"></div>
<div class="a" style="left:1612px;top:1028px;width:1px;height:21px;background:#5a5a5a"></div>
<div class="a" style="left:1645px;top:1028px;width:1px;height:21px;background:#5a5a5a"></div>
<div class="a" style="left:1551px;top:1030px;width:9px;height:14px;border:1px solid #fff;background:#3e3e3e"></div>
<div class="a" style="left:1559px;top:1031px;width:19px;height:13px;border:1px solid #fff;background:#5e5e5e"></div>

<div class="a" style="left:0px;top:24px;width:192px;height:270px;background:#6b6b6b;border:1px solid #4a4a4a;border-top:1px solid #4a4a4a;box-shadow:0 0 7px rgba(0,0,0,0.45)"></div>
<svg class="a" style="left:6px;top:28px" width="22" height="22" viewBox="0 0 22 22"><path d="M7 21.5 L21.5 21.5 L21.5 1.5 Z" fill="#e8c828" stroke="#b89410" stroke-width="0.8"/>
<path d="M13 18.5 L18.5 18.5 L18.5 11 Z" fill="#c8a818"/><path d="M20 4 L20 20" stroke="#fff6a0" stroke-width="0.8" stroke-dasharray="1 1.2"/>
<path d="M3.5 2 L10.5 14 M15 2 L8.5 14" stroke="#dcdcdc" stroke-width="2.6" stroke-linecap="round"/>
<circle cx="5.5" cy="17.5" r="3.3" fill="none" stroke="#e01818" stroke-width="2.2"/><circle cx="13" cy="17.5" r="3.3" fill="none" stroke="#e01818" stroke-width="2.2"/></svg>
<div class="t" style="left:34px;top:30px;color:#e2e2e2">Accessoires</div>
<svg class="a" style="left:181px;top:33px" width="8" height="13" viewBox="0 0 8 13"><path d="M1.5 1 L6.5 6.5 L1.5 12" fill="none" stroke="#ececec" stroke-width="1.4"/></svg>
<svg class="a" style="left:6px;top:58px" width="22" height="22" viewBox="0 0 22 22"><defs><linearGradient id="gu" x1="0" y1="0" x2="0.4" y2="1"><stop offset="0" stop-color="#3868b0"/><stop offset="1" stop-color="#80aee0"/></linearGradient></defs>
<rect x="1.5" y="1.5" width="19" height="19" rx="3" fill="url(#gu)" stroke="#2858a8" stroke-width="1"/>
<rect x="2.8" y="2.8" width="16.4" height="16.4" rx="2" fill="none" stroke="#fff" stroke-width="1.1"/>
<circle cx="10.2" cy="6" r="1.5" fill="#fff"/><path d="M10.2 8 L10.2 12.5 L13.5 12.5 L15 16 M10.2 10 L13 10" fill="none" stroke="#fff" stroke-width="1.2"/>
<path d="M8 11.5 A3.6 3.6 0 1 0 13.5 15.5" fill="none" stroke="#fff" stroke-width="1.1"/></svg>
<div class="t" style="left:34px;top:60px;color:#e2e2e2">Accès universel</div>
<svg class="a" style="left:181px;top:63px" width="8" height="13" viewBox="0 0 8 13"><path d="M1.5 1 L6.5 6.5 L1.5 12" fill="none" stroke="#ececec" stroke-width="1.4"/></svg>
<svg class="a" style="left:6px;top:88px" width="22" height="22" viewBox="0 0 22 22"><path d="M6 10 L16.5 10 L16 21 L6.5 21 Z" fill="#e8e8e8" stroke="#fafafa" stroke-width="1"/><path d="M8 12 L14.5 20" stroke="#c8b898" stroke-width="2"/>
<path d="M2.5 2 L12 13" stroke="#4a80c8" stroke-width="3.2" stroke-linecap="round"/><path d="M3 3 L11 12" stroke="#8ab8e8" stroke-width="1"/>
<path d="M19 1.5 L13.5 12" stroke="#d89c28" stroke-width="2.2"/><path d="M19 1.5 L18 3.5" stroke="#4a3010" stroke-width="2"/></svg>
<div class="t" style="left:34px;top:90px;color:#e2e2e2">Bureautique</div>
<svg class="a" style="left:181px;top:93px" width="8" height="13" viewBox="0 0 8 13"><path d="M1.5 1 L6.5 6.5 L1.5 12" fill="none" stroke="#ececec" stroke-width="1.4"/></svg>
<svg class="a" style="left:6px;top:118px" width="22" height="22" viewBox="0 0 22 22"><rect x="3" y="2" width="4" height="18" fill="#f0f0f0" stroke="#bbb" stroke-width="0.6"/><rect x="2" y="1" width="6" height="2" fill="#40c040"/><rect x="4" y="4" width="1.5" height="14" fill="#40c040"/>
<rect x="11.5" y="5" width="9" height="13" rx="1" fill="#eee" stroke="#ccc" stroke-width="0.8"/><rect x="12.5" y="9" width="5" height="8" fill="#888"/><path d="M12.5 9.5 L17.5 9.5 M17.5 9.5 L17.5 17" stroke="#e06010" stroke-width="1.4"/><path d="M12.5 9.5 L17.5 9.5" stroke="#3a70c8" stroke-width="1.4"/>
<path d="M8.5 9.5 L11 9.5 L11 13 L14.5 19 A2 2 0 0 1 12.5 21.5 L7 21.5 A2 2 0 0 1 5 19 L8.5 13 Z" fill="#f4f4f4"/><ellipse cx="9.8" cy="18.8" rx="4.5" ry="2.8" fill="#30c030"/></svg>
<div class="t" style="left:34px;top:120px;color:#e2e2e2">Éducation</div>
<svg class="a" style="left:181px;top:123px" width="8" height="13" viewBox="0 0 8 13"><path d="M1.5 1 L6.5 6.5 L1.5 12" fill="none" stroke="#ececec" stroke-width="1.4"/></svg>
<svg class="a" style="left:6px;top:148px" width="22" height="22" viewBox="0 0 22 22"><path d="M20.3 0.6 Q21.6 1.4 20.8 2.8 L12.2 14.2 L9.4 11.8 L18.6 1 Q19.4 0.2 20.3 0.6 Z" fill="#e0801c" stroke="#8a4a10" stroke-width="0.6"/><path d="M19.5 1.5 L11 12.5" stroke="#f8b060" stroke-width="0.8"/>
<path d="M12.2 14.2 L8.6 18 L5.8 15.4 L9.4 11.8 Z" fill="#ececec" stroke="#888" stroke-width="0.5"/>
<path d="M8.6 18 Q6 21.2 0.4 21.7 Q3 17 5.8 15.4 Z" fill="#0c0c0c"/><circle cx="6.3" cy="17" r="0.9" fill="#9a9a9a"/><path d="M8 20.5 L14 20.5" stroke="#000" stroke-width="1.2" opacity="0.25"/></svg>
<div class="t" style="left:34px;top:150px;color:#e2e2e2">Graphisme</div>
<svg class="a" style="left:181px;top:153px" width="8" height="13" viewBox="0 0 8 13"><path d="M1.5 1 L6.5 6.5 L1.5 12" fill="none" stroke="#ececec" stroke-width="1.4"/></svg>
<svg class="a" style="left:6px;top:178px" width="22" height="22" viewBox="0 0 22 22"><defs><radialGradient id="gi" cx="0.5" cy="0.45" r="0.55"><stop offset="0" stop-color="#e8f2fc"/><stop offset="0.55" stop-color="#7aa8e0"/><stop offset="1" stop-color="#2a5aa8"/></radialGradient></defs>
<circle cx="11" cy="11.5" r="10" fill="url(#gi)" stroke="#2a58a8" stroke-width="0.6"/>
<path d="M13 5 Q17 6 17.5 9.5 Q15 12 12.5 10.5 Q11 8 13 5 Z" fill="#3a6ab8"/><path d="M4 14.5 Q7 14 9 16.5 Q8 19.5 5.5 19 Q3.5 17 4 14.5 Z" fill="#3a6ab8"/>
<path d="M1.5 9 Q9 5.5 20.5 14" fill="none" stroke="#fff" stroke-width="1.8"/><path d="M2.5 15.5 Q11 13 19 17.5" fill="none" stroke="#fff" stroke-width="1.3" opacity="0.9"/></svg>
<div class="t" style="left:34px;top:180px;color:#e2e2e2">Internet</div>
<svg class="a" style="left:181px;top:183px" width="8" height="13" viewBox="0 0 8 13"><path d="M1.5 1 L6.5 6.5 L1.5 12" fill="none" stroke="#ececec" stroke-width="1.4"/></svg>
<svg class="a" style="left:6px;top:208px" width="22" height="22" viewBox="0 0 22 22"><path d="M9.5 1.5 L12.5 1.5 L13 4.2 L15.3 5.2 L17.5 3.5 L19.5 5.5 L17.8 7.8 L18.8 10 L21.5 10.5 L21.5 13.5 L18.8 14 L17.8 16.3 L19.5 18.5 L17.5 20.5 L15.3 18.8 L13 19.8 L12.5 22 L9.5 22 L9 19.8 L6.7 18.8 L4.5 20.5 L2.5 18.5 L4.2 16.3 L3.2 14 L0.5 13.5 L0.5 10.5 L3.2 10 L4.2 7.8 L2.5 5.5 L4.5 3.5 L6.7 5.2 L9 4.2 Z" fill="#d0d0f0" stroke="#3a68c8" stroke-width="1"/>
<circle cx="11" cy="12" r="3.3" fill="#6b6b6b" stroke="#8888b8" stroke-width="1.2"/></svg>
<div class="t" style="left:34px;top:210px;color:#e2e2e2">Outils système</div>
<svg class="a" style="left:181px;top:213px" width="8" height="13" viewBox="0 0 8 13"><path d="M1.5 1 L6.5 6.5 L1.5 12" fill="none" stroke="#ececec" stroke-width="1.4"/></svg>
<svg class="a" style="left:6px;top:238px" width="22" height="22" viewBox="0 0 22 22"><defs><radialGradient id="gp" cx="0.45" cy="0.35" r="0.7"><stop offset="0" stop-color="#fbf6b0"/><stop offset="0.55" stop-color="#e8d830"/><stop offset="1" stop-color="#b8a010"/></radialGradient></defs>
<path d="M1 14 Q1 1 11 1 Q21 1 21 14 L21 17.5 Q11 22 1 17.5 Z" fill="url(#gp)" stroke="#a89010" stroke-width="0.7"/>
<path d="M8 1.8 L14 1.8 L14 11.5 L8 11.5 Z" fill="#f0e470" opacity="0.55"/><path d="M7.5 11.5 L14.5 11.5 L14.5 16 L7.5 16 Z" fill="none" stroke="#c8b420" stroke-width="0.8"/>
<path d="M1.5 16 Q11 20.5 20.5 16" fill="none" stroke="#fbf4c0" stroke-width="1.2"/></svg>
<div class="t" style="left:34px;top:240px;color:#e2e2e2">Programmation</div>
<svg class="a" style="left:181px;top:243px" width="8" height="13" viewBox="0 0 8 13"><path d="M1.5 1 L6.5 6.5 L1.5 12" fill="none" stroke="#ececec" stroke-width="1.4"/></svg>
<div class="a" style="left:1px;top:264px;width:190px;height:30px;background:linear-gradient(#525252,#454545);border-top:1px solid #363636;border-bottom:1px solid #3c3c3c"></div>
<svg class="a" style="left:6px;top:268px" width="22" height="22" viewBox="0 0 22 22"><path d="M1.5 6 L20 1.5 L20.5 5 L2 9 Z" fill="#f0f0f0" stroke="#222" stroke-width="0.8"/><path d="M5 5 L7.5 3 M9.5 4 L12 2 M14 3 L16.5 1.5" stroke="#111" stroke-width="1.6"/>
<rect x="2.5" y="9" width="17" height="11" fill="#585858" stroke="#ccc" stroke-width="0.8"/><path d="M3 10 L19 10" stroke="#eee" stroke-width="1.8" stroke-dasharray="2 1.5"/><rect x="5" y="13" width="12" height="4" fill="#aaa" opacity="0.7"/></svg>
<div class="t" style="left:34px;top:270px;color:#e2e2e2">Son et vidéo</div>
<svg class="a" style="left:181px;top:273px" width="8" height="13" viewBox="0 0 8 13"><path d="M1.5 1 L6.5 6.5 L1.5 12" fill="none" stroke="#ececec" stroke-width="1.4"/></svg>
<div class="a" style="left:192px;top:264px;width:352px;height:690px;background:#6b6b6b;border:1px solid #4a4a4a;border-top:1px solid #4a4a4a;box-shadow:0 0 7px rgba(0,0,0,0.45)"></div>
<svg class="a" style="left:196px;top:267px" width="24" height="24" viewBox="0 0 24 24"><defs><linearGradient id="gt" x1="0" y1="0" x2="0" y2="1"><stop offset="0" stop-color="#555"/><stop offset="1" stop-color="#222"/></linearGradient></defs>
<path d="M1 18 Q1 4 12 4 Q23 4 23 18 L23 19 L1 19 Z" fill="url(#gt)" stroke="#1a1a1a" stroke-width="0.8"/><path d="M2.5 17 Q2.5 5.5 12 5.5 Q21.5 5.5 21.5 17" fill="none" stroke="#888" stroke-width="0.6"/>
<g fill="#ddd"><rect x="11.3" y="6.5" width="1.4" height="1.6"/><rect x="6.5" y="8" width="1.2" height="1.5"/><rect x="16.3" y="8" width="1.2" height="1.5"/><rect x="3.5" y="11" width="1.2" height="1.5"/><rect x="19.3" y="11" width="1.2" height="1.5"/><rect x="2.5" y="16" width="1.2" height="1.5"/><rect x="20.3" y="16" width="1.2" height="1.5"/></g>
<path d="M5.5 10 L12 17" stroke="#f01818" stroke-width="1.5"/></svg>
<div class="t" style="left:225px;top:270px;color:#e2e2e2">Accordeurs</div>
<svg class="a" style="left:531px;top:273px" width="8" height="13" viewBox="0 0 8 13"><path d="M1.5 1 L6.5 6.5 L1.5 12" fill="none" stroke="#ececec" stroke-width="1.4"/></svg>
<svg class="a" style="left:196px;top:297px" width="24" height="24" viewBox="0 0 24 24"><path d="M0 8.5 Q6 18 20 16 Q12 14 7 11 Z" fill="#0808f8"/><path d="M0.5 8 Q3 4 7.5 7 L20 16 Q10 19 0.5 8 Z" fill="#0a0af0"/>
<path d="M11 9 L13 7.5" stroke="#0808f8" stroke-width="1.8"/><path d="M7 16 L2 24 L14 24 L11 17 Z" fill="#0808f8"/>
<path d="M10 4 A5 5 0 0 1 15 8 M10.5 1.5 A8 8 0 0 1 18 6.5 M11 -1 A11 11 0 0 1 21.5 5" fill="none" stroke="#0808f8" stroke-width="1.3"/></svg>
<div class="t" style="left:225px;top:300px;color:#e2e2e2">Diffusion</div>
<svg class="a" style="left:531px;top:303px" width="8" height="13" viewBox="0 0 8 13"><path d="M1.5 1 L6.5 6.5 L1.5 12" fill="none" stroke="#ececec" stroke-width="1.4"/></svg>
<svg class="a" style="left:196px;top:327px" width="24" height="24" viewBox="0 0 24 24"><defs><linearGradient id="gh" x1="0" y1="0" x2="1" y2="0"><stop offset="0" stop-color="#2a2a2a"/><stop offset="0.5" stop-color="#5a5a5a"/><stop offset="1" stop-color="#2a2a2a"/></linearGradient></defs>
<ellipse cx="12" cy="19.5" rx="11" ry="4" fill="#3a3a3a" stroke="#999" stroke-width="0.6"/><path d="M4.5 2.5 Q12 0 19.5 2.5 L18 19 Q12 21 6 19 Z" fill="url(#gh)" stroke="#888" stroke-width="0.6"/>
<path d="M5.6 15.5 Q12 17.5 18.4 15.5 L18.1 19 Q12 21 5.9 19 Z" fill="#a070d0"/><ellipse cx="12" cy="2.7" rx="7.5" ry="1.6" fill="#666" stroke="#aaa" stroke-width="0.6"/></svg>
<div class="t" style="left:225px;top:330px;color:#e2e2e2">Divers</div>
<svg class="a" style="left:531px;top:333px" width="8" height="13" viewBox="0 0 8 13"><path d="M1.5 1 L6.5 6.5 L1.5 12" fill="none" stroke="#ececec" stroke-width="1.4"/></svg>
<svg class="a" style="left:196px;top:357px" width="24" height="24" viewBox="0 0 24 24"><circle cx="11.5" cy="12" r="10.8" fill="#2a2a2a" stroke="#111" stroke-width="0.6"/><circle cx="11.5" cy="12" r="8" fill="none" stroke="#444" stroke-width="0.8"/>
<circle cx="11.5" cy="12" r="4.3" fill="#e80808"/><circle cx="11.5" cy="12" r="1.3" fill="#fff"/><circle cx="11.5" cy="12" r="0.6" fill="#000"/>
<path d="M21 1.5 L18 6 L18 15 L14 18.5" fill="none" stroke="#ddd" stroke-width="1.4"/></svg>
<div class="t" style="left:225px;top:360px;color:#e2e2e2">DJaying</div>
<svg class="a" style="left:531px;top:363px" width="8" height="13" viewBox="0 0 8 13"><path d="M1.5 1 L6.5 6.5 L1.5 12" fill="none" stroke="#ececec" stroke-width="1.4"/></svg>
<svg class="a" style="left:196px;top:387px" width="24" height="24" viewBox="0 0 24 24"><path d="M19.5 1 Q10 5 8 14 Q7 17 9 18 Q15 15 17.5 8 L16 8.5 L18.5 5.5 Z" fill="#60b8f0" stroke="#3a90d0" stroke-width="0.6"/>
<path d="M19 2 L5 21" stroke="#e8f4ff" stroke-width="0.9"/><path d="M5.5 20 L4.5 22" stroke="#4040e0" stroke-width="1.8"/></svg>
<div class="t" style="left:225px;top:390px;color:#e2e2e2">Éditeurs de partitions</div>
<svg class="a" style="left:531px;top:393px" width="8" height="13" viewBox="0 0 8 13"><path d="M1.5 1 L6.5 6.5 L1.5 12" fill="none" stroke="#ececec" stroke-width="1.4"/></svg>
<svg class="a" style="left:196px;top:417px" width="24" height="24" viewBox="0 0 24 24"><rect x="1.5" y="14.5" width="20" height="7" fill="#f0e4c0" stroke="#a07830" stroke-width="0.8"/><rect x="1.5" y="19" width="20" height="2.5" fill="#c89850"/>
<rect x="3" y="9" width="19" height="6" fill="#f4ecd8" stroke="#2a70c0" stroke-width="0.8"/><rect x="3" y="13" width="19" height="2" fill="#3a78c8"/>
<path d="M4 9 Q4 1.5 8 1.5 L18 1.5 Q21.5 1.5 21.5 9 Z" fill="#5a9ad8" stroke="#2a68b8" stroke-width="0.8"/><rect x="9" y="3" width="7" height="1.5" fill="#d8e8f8"/>
<rect x="6" y="12.5" width="3" height="8" fill="#e02020"/><path d="M6 20.5 L7.5 19 L9 20.5" fill="#f0e4c0"/></svg>
<div class="t" style="left:225px;top:420px;color:#e2e2e2">Éducation musicale</div>
<svg class="a" style="left:531px;top:423px" width="8" height="13" viewBox="0 0 8 13"><path d="M1.5 1 L6.5 6.5 L1.5 12" fill="none" stroke="#ececec" stroke-width="1.4"/></svg>
<svg class="a" style="left:196px;top:447px" width="24" height="24" viewBox="0 0 24 24"><path d="M3 21 L17 7" stroke="#777" stroke-width="3.6" stroke-linecap="round"/><path d="M3 21 L17 7" stroke="#e8e8e8" stroke-width="1.8" stroke-linecap="round"/><path d="M3 21 L7 17" stroke="#fff" stroke-width="2.4"/>
<path d="M18 0 L19 4 L22.5 2.5 L20.5 6 L24 7.5 L20 8.5 L21.5 12 L18 10 L16 13 L15.5 9.5 L12 9.5 L14.5 7 L12.5 3.5 L16 4.5 Z" fill="#f8b020"/><circle cx="18" cy="7" r="2.5" fill="#fff080"/></svg>
<div class="t" style="left:225px;top:450px;color:#e2e2e2">Effets</div>
<svg class="a" style="left:531px;top:453px" width="8" height="13" viewBox="0 0 8 13"><path d="M1.5 1 L6.5 6.5 L1.5 12" fill="none" stroke="#ececec" stroke-width="1.4"/></svg>
<svg class="a" style="left:196px;top:477px" width="24" height="24" viewBox="0 0 24 24"><defs><linearGradient id="gb" x1="0" y1="0" x2="1" y2="0"><stop offset="0" stop-color="#3a88d8"/><stop offset="1" stop-color="#90c8f0"/></linearGradient></defs>
<rect x="0.5" y="4" width="3.8" height="11" fill="url(#gb)" stroke="#3a78c8" stroke-width="0.5"/><rect x="5.5" y="4" width="3.8" height="11" fill="url(#gb)" stroke="#3a78c8" stroke-width="0.5"/>
<circle cx="16.5" cy="9.5" r="5.6" fill="#f01010" stroke="#c00" stroke-width="0.5"/><circle cx="15.5" cy="8" r="2.5" fill="#ff5050" opacity="0.6"/></svg>
<div class="t" style="left:225px;top:480px;color:#e2e2e2">Enregistreurs et/ou éditeurs</div>
<svg class="a" style="left:531px;top:483px" width="8" height="13" viewBox="0 0 8 13"><path d="M1.5 1 L6.5 6.5 L1.5 12" fill="none" stroke="#ececec" stroke-width="1.4"/></svg>
<svg class="a" style="left:196px;top:507px" width="24" height="24" viewBox="0 0 24 24"><path d="M1 21.5 L1 11 L7 7 L7 10 L13 7 L13 10 L19 7 L19 0.5 L22 0.5 L22 21.5 Z" fill="#d83a28" stroke="#a02010" stroke-width="0.6"/>
<path d="M20.5 2 L20.5 8" stroke="#f8e0d8" stroke-width="1.2" stroke-dasharray="1.5 1.5"/><path d="M3 13.5 L20 13.5 M3 16.5 L20 16.5" stroke="#fbe8e0" stroke-width="1.4" stroke-dasharray="5.5 0.8"/></svg>
<div class="t" style="left:225px;top:510px;color:#e2e2e2">Environnement de programmation audio</div>
<svg class="a" style="left:531px;top:513px" width="8" height="13" viewBox="0 0 8 13"><path d="M1.5 1 L6.5 6.5 L1.5 12" fill="none" stroke="#ececec" stroke-width="1.4"/></svg>
<svg class="a" style="left:196px;top:537px" width="24" height="24" viewBox="0 0 24 24"><defs><radialGradient id="gc" cx="0.5" cy="0.5" r="0.5"><stop offset="0" stop-color="#f8fcff"/><stop offset="0.5" stop-color="#c8e4f8"/><stop offset="1" stop-color="#9ac8f0"/></radialGradient></defs>
<circle cx="11.5" cy="11" r="11" fill="url(#gc)" stroke="#a8c8e8" stroke-width="0.5"/><path d="M3 18 L20 4" stroke="#c8b8e8" stroke-width="3" opacity="0.7"/>
<circle cx="11.5" cy="11" r="3.8" fill="#8ab8e0"/><circle cx="11.5" cy="11" r="1.4" fill="#333"/></svg>
<div class="t" style="left:225px;top:540px;color:#e2e2e2">Lecteurs et graveurs</div>
<svg class="a" style="left:531px;top:543px" width="8" height="13" viewBox="0 0 8 13"><path d="M1.5 1 L6.5 6.5 L1.5 12" fill="none" stroke="#ececec" stroke-width="1.4"/></svg>
<svg class="a" style="left:196px;top:567px" width="24" height="24" viewBox="0 0 24 24"><path d="M4 9 Q4 2.5 12 2.5 Q20 2.5 20 9 Z" fill="#e8e8f0" stroke="#bbc" stroke-width="0.6"/><rect x="8" y="3.5" width="3" height="2" fill="#2a50b0"/><rect x="13" y="3.5" width="3" height="2" fill="#2a50b0"/><rect x="4.5" y="7" width="15" height="1.5" fill="#2a50b0"/>
<rect x="5" y="9" width="14" height="12" fill="#f4f4f8" stroke="#bbc" stroke-width="0.6"/><rect x="6" y="10.5" width="12" height="1.2" fill="#2a50b0"/><rect x="6" y="13" width="12" height="1.2" fill="#2a50b0"/><rect x="10.5" y="15.5" width="3" height="4" fill="#333"/>
<rect x="1.5" y="11" width="3" height="10" fill="#f0f0f4" stroke="#bbc" stroke-width="0.5"/><rect x="19.5" y="11" width="3" height="10" fill="#f0f0f4" stroke="#bbc" stroke-width="0.5"/></svg>
<div class="t" style="left:225px;top:570px;color:#e2e2e2">Logiciels de boucle</div>
<svg class="a" style="left:531px;top:573px" width="8" height="13" viewBox="0 0 8 13"><path d="M1.5 1 L6.5 6.5 L1.5 12" fill="none" stroke="#ececec" stroke-width="1.4"/></svg>
<svg class="a" style="left:196px;top:597px" width="24" height="24" viewBox="0 0 24 24"><path d="M8.5 0.5 L14.5 0.5 L20.5 21.5 L2.5 21.5 Z" fill="#f0a050" stroke="#8a3a10" stroke-width="0.8"/><path d="M9.5 3 L13.5 3 L17 18 L6 18 Z" fill="#3a3a40"/><rect x="3" y="18" width="17" height="3.5" fill="#f0b060"/>
<path d="M1.5 1.5 L12 16" stroke="#ddd" stroke-width="1.3"/><circle cx="2" cy="2" r="1.6" fill="#eee"/></svg>
<div class="t" style="left:225px;top:600px;color:#e2e2e2">Métronomes</div>
<svg class="a" style="left:531px;top:603px" width="8" height="13" viewBox="0 0 8 13"><path d="M1.5 1 L6.5 6.5 L1.5 12" fill="none" stroke="#ececec" stroke-width="1.4"/></svg>
<svg class="a" style="left:196px;top:627px" width="24" height="24" viewBox="0 0 24 24"><rect x="0.5" y="0.5" width="22" height="21" fill="#e8e8e8" stroke="#bbb" stroke-width="0.8"/>
<path d="M3.5 3 L3.5 19 M7.5 3 L7.5 19 M11.5 3 L11.5 19 M15.5 3 L15.5 19 M19.5 3 L19.5 19" stroke="#aaa" stroke-width="1"/>
<rect x="2" y="13.5" width="3" height="2.5" fill="#1a1a1a"/><rect x="6" y="11.5" width="3" height="2.5" fill="#1a1a1a"/><rect x="10" y="9" width="3" height="2.5" fill="#1a1a1a"/><rect x="14" y="6.5" width="3" height="2.5" fill="#1a1a1a"/><rect x="18" y="4" width="3" height="2.5" fill="#1a1a1a"/></svg>
<div class="t" style="left:225px;top:630px;color:#e2e2e2">Mixeurs</div>
<svg class="a" style="left:531px;top:633px" width="8" height="13" viewBox="0 0 8 13"><path d="M1.5 1 L6.5 6.5 L1.5 12" fill="none" stroke="#ececec" stroke-width="1.4"/></svg>
<svg class="a" style="left:196px;top:657px" width="24" height="24" viewBox="0 0 24 24"><rect x="0.5" y="7" width="3.5" height="8" fill="#f8c020" stroke="#c89010" stroke-width="0.5"/><path d="M4 7.5 L12.5 0.5 L12.5 21.5 L4 14.5 Z" fill="#a8b8c8" stroke="#6a7a8a" stroke-width="0.6"/>
<path d="M15 8 A3.5 3.5 0 0 1 15 14 M17 5.5 A6.5 6.5 0 0 1 17 16.5 M19 3 A9.5 9.5 0 0 1 19 19" fill="none" stroke="#2a70d0" stroke-width="1.3"/></svg>
<div class="t" style="left:225px;top:660px;color:#e2e2e2">Outils audio</div>
<svg class="a" style="left:531px;top:663px" width="8" height="13" viewBox="0 0 8 13"><path d="M1.5 1 L6.5 6.5 L1.5 12" fill="none" stroke="#ececec" stroke-width="1.4"/></svg>
<svg class="a" style="left:196px;top:687px" width="24" height="24" viewBox="0 0 24 24"><rect x="2" y="2" width="21" height="16" fill="#5aa0d8" stroke="#2a68a8" stroke-width="0.8"/><rect x="3" y="5" width="3" height="3" fill="#aab"/>
<path d="M9 13 L10 3 L13 3 L14 13 Z M16 13 L17 3 L20 3 L21 13 Z" fill="#333"/><rect x="4" y="10" width="2" height="7" fill="#223"/>
<path d="M7 15 L16 15" stroke="#223" stroke-width="1.5" stroke-dasharray="2 1"/><rect x="18" y="14" width="3" height="3" fill="#f8e080"/><path d="M4 19 L20 19" stroke="#f8d860" stroke-width="2" stroke-dasharray="1.5 0.8"/><path d="M0.5 1 L0.5 21" stroke="#999" stroke-width="0.8"/></svg>
<div class="t" style="left:225px;top:690px;color:#e2e2e2">Outils de contrôle des matériels</div>
<svg class="a" style="left:531px;top:693px" width="8" height="13" viewBox="0 0 8 13"><path d="M1.5 1 L6.5 6.5 L1.5 12" fill="none" stroke="#ececec" stroke-width="1.4"/></svg>
<svg class="a" style="left:196px;top:717px" width="24" height="24" viewBox="0 0 24 24"><path d="M1.5 21.5 L12 11" stroke="#111" stroke-width="5" stroke-linecap="round"/><path d="M3 19 L11 11" stroke="#444" stroke-width="1.2"/>
<path d="M12 11 L18.5 4.5" stroke="#ccc" stroke-width="2.4"/><path d="M18.5 4.5 L22 1" stroke="#ddd" stroke-width="1.6"/><path d="M15 8 L16 7 M19 4 L20 3" stroke="#333" stroke-width="1.2"/></svg>
<div class="t" style="left:225px;top:720px;color:#e2e2e2">Outils JACK</div>
<svg class="a" style="left:531px;top:723px" width="8" height="13" viewBox="0 0 8 13"><path d="M1.5 1 L6.5 6.5 L1.5 12" fill="none" stroke="#ececec" stroke-width="1.4"/></svg>
<svg class="a" style="left:196px;top:747px" width="24" height="24" viewBox="0 0 24 24"><circle cx="11.5" cy="11.5" r="10.3" fill="#fafafa" stroke="#ddd" stroke-width="0.8"/>
<g fill="#ccc" stroke="#99a" stroke-width="0.4"><circle cx="5" cy="10" r="1.4"/><circle cx="18" cy="10" r="1.4"/><circle cx="7.5" cy="5.5" r="1.4"/><circle cx="15.5" cy="5.5" r="1.4"/><circle cx="11.5" cy="4" r="1.4"/></g><path d="M9.5 20 L11.5 18 L13.5 20" fill="#ccc"/></svg>
<div class="t" style="left:225px;top:750px;color:#e2e2e2">Outils MIDI</div>
<svg class="a" style="left:531px;top:753px" width="8" height="13" viewBox="0 0 8 13"><path d="M1.5 1 L6.5 6.5 L1.5 12" fill="none" stroke="#ececec" stroke-width="1.4"/></svg>
<svg class="a" style="left:196px;top:777px" width="24" height="24" viewBox="0 0 24 24"><path d="M1.5 5.5 L20.5 1 L21.5 4.5 L2.5 9 Z" fill="#f0f0f0" stroke="#222" stroke-width="0.8"/><path d="M5 4.5 L7.5 2.5 M10 3.5 L12.5 1.8 M15 2.3 L17.5 1" stroke="#111" stroke-width="1.7"/>
<defs><linearGradient id="gv" x1="0" y1="0" x2="0" y2="1"><stop offset="0" stop-color="#555"/><stop offset="1" stop-color="#888"/></linearGradient></defs>
<rect x="1.5" y="9" width="20" height="12.5" fill="url(#gv)" stroke="#222" stroke-width="0.8"/><path d="M2 10.5 L21 10.5" stroke="#eee" stroke-width="1.6" stroke-dasharray="2.5 1.5"/></svg>
<div class="t" style="left:225px;top:780px;color:#e2e2e2">Production vidéo</div>
<svg class="a" style="left:531px;top:783px" width="8" height="13" viewBox="0 0 8 13"><path d="M1.5 1 L6.5 6.5 L1.5 12" fill="none" stroke="#ececec" stroke-width="1.4"/></svg>
<div class="a" style="left:193px;top:804px;width:350px;height:30px;background:linear-gradient(#525252,#454545);border-top:1px solid #363636;border-bottom:1px solid #3c3c3c"></div>
<svg class="a" style="left:196px;top:807px" width="24" height="24" viewBox="0 0 24 24"><defs><radialGradient id="gs" cx="0.5" cy="0.35" r="0.65"><stop offset="0" stop-color="#f4faff"/><stop offset="1" stop-color="#a8d0f0"/></radialGradient></defs>
<circle cx="11.5" cy="11.5" r="10.8" fill="url(#gs)" stroke="#eaf4ff" stroke-width="0.8"/><path d="M9 6.5 L15 11.5 L9 16.5 Z" fill="#3a88d0"/></svg>
<div class="t" style="left:225px;top:810px;color:#e2e2e2">Séquenceurs audio et/ou MIDI</div>
<svg class="a" style="left:531px;top:813px" width="8" height="13" viewBox="0 0 8 13"><path d="M1.5 1 L6.5 6.5 L1.5 12" fill="none" stroke="#ececec" stroke-width="1.4"/></svg>
<svg class="a" style="left:196px;top:837px" width="24" height="24" viewBox="0 0 24 24"><defs><linearGradient id="gk" x1="0" y1="0" x2="0" y2="1"><stop offset="0" stop-color="#fff"/><stop offset="1" stop-color="#aaa"/></linearGradient></defs>
<rect x="1" y="2" width="21.5" height="18" rx="2" fill="url(#gk)" stroke="#333" stroke-width="1"/><rect x="4.5" y="2" width="2.5" height="9.5" fill="#1a1a1a"/><rect x="10.5" y="2" width="2.5" height="9.5" fill="#1a1a1a"/><rect x="16.5" y="2" width="2.5" height="9.5" fill="#1a1a1a"/>
<path d="M8.5 11.5 L8.5 20 M14.8 11.5 L14.8 20" stroke="#888" stroke-width="0.8"/><rect x="1" y="17" width="21.5" height="3" fill="#444" opacity="0.5"/></svg>
<div class="t" style="left:225px;top:840px;color:#e2e2e2">Synthétiseurs et échantillonneurs</div>
<svg class="a" style="left:531px;top:843px" width="8" height="13" viewBox="0 0 8 13"><path d="M1.5 1 L6.5 6.5 L1.5 12" fill="none" stroke="#ececec" stroke-width="1.4"/></svg>
<svg class="a" style="left:196px;top:867px" width="24" height="24" viewBox="0 0 24 24"><defs><linearGradient id="rb"><stop offset="0" stop-color="#e02828"/><stop offset="0.2" stop-color="#f09030"/><stop offset="0.42" stop-color="#f8f040"/><stop offset="0.6" stop-color="#60d070"/><stop offset="0.8" stop-color="#4088f0"/><stop offset="1" stop-color="#5050c8"/></linearGradient>
<linearGradient id="rbw" x1="0" y1="0" x2="0" y2="1"><stop offset="0" stop-color="#fff" stop-opacity="0.45"/><stop offset="0.5" stop-color="#fff" stop-opacity="0"/></linearGradient></defs>
<rect x="1" y="1" width="21.5" height="22" rx="2.5" fill="url(#rb)" stroke="#5a5aa0" stroke-width="0.6"/><rect x="1" y="1" width="21.5" height="22" rx="2.5" fill="url(#rbw)"/></svg>
<div class="t" style="left:225px;top:870px;color:#e2e2e2">Visualisation et analyse du signal</div>
<svg class="a" style="left:531px;top:873px" width="8" height="13" viewBox="0 0 8 13"><path d="M1.5 1 L6.5 6.5 L1.5 12" fill="none" stroke="#ececec" stroke-width="1.4"/></svg>

<div class="t" style="left:225px;top:900px;color:#e2e2e2">Application de téléchargement « AMZ »</div>
<svg class="a" style="left:196px;top:927px" width="24" height="24" viewBox="0 0 24 24"><circle cx="12" cy="12" r="11.5" fill="#000"/><circle cx="12" cy="12" r="8.8" fill="#e4e4e4"/>
<path d="M8.5 9.5 Q9.5 7 12.5 7 Q16 7 16 10.5 L16 16.5 L13.8 16.5 L13.8 15.5 Q12.8 16.8 11 16.8 Q8 16.8 8 14 Q8 11.3 11.5 11.3 L13.8 11.3 L13.8 10.5 Q13.8 9 12.3 9 Q11 9 10.6 10 Z M13.8 13 L11.8 13 Q10.2 13 10.2 14 Q10.2 15 11.5 15 Q13.8 15 13.8 13 Z" fill="#000"/></svg>
<div class="t" style="left:225px;top:930px;color:#e2e2e2">Audacious Qt Interface</div>
<div class="a" style="left:543px;top:690px;width:202px;height:360px;background:#6b6b6b;border:1px solid #4a4a4a;border-top:1px solid #4a4a4a;box-shadow:0 0 7px rgba(0,0,0,0.45)"></div>
<svg class="a" style="left:547px;top:693px" width="24" height="24" viewBox="0 0 24 24"><path d="M0.5 12 L4 13.8 L4.8 11 L6.8 14.2 L8 11.5 L9.5 14.6 L12 15.5 L11 19.5 L6 19.5 Z" fill="#10a010" stroke="#064006" stroke-width="0.6"/>
<path d="M13 12.5 Q13.5 8 18 7 Q21 6.5 24.5 4.2 L24.5 13 Q21 14 18 14.5 L14.5 15.5 Z" fill="#e0dc10" stroke="#5a5a20" stroke-width="0.6"/><circle cx="17.8" cy="9.5" r="0.9" fill="#111"/><path d="M18 14 L19.5 19.5 L21.2 14.5 Z" fill="#10a010" stroke="#064006" stroke-width="0.5"/></svg>
<div class="t" style="left:576px;top:696px;color:#e2e2e2">Dino</div>
<svg class="a" style="left:547px;top:723px" width="24" height="24" viewBox="0 0 24 24"><path d="M1 13 Q3 10 8 10.5 L16 10 Q22 10.5 23 13.5 Q21 16 15 16 L6 16 Q2 15.5 1 13 Z" fill="#20a020"/>
<ellipse cx="8.5" cy="10" rx="6.5" ry="4" fill="#e87030" stroke="#b04010" stroke-width="0.5"/><ellipse cx="7" cy="8.5" rx="3" ry="1.5" fill="#f8a060" opacity="0.7"/><path d="M14 11 L19 12.5" stroke="#f0d8c0" stroke-width="2"/><circle cx="20" cy="12" r="1.5" fill="#f0d8c0"/><circle cx="19.5" cy="14" r="1.3" fill="#f0d8c0"/></svg>
<div class="t" style="left:576px;top:726px;color:#e2e2e2">Drumstick Drum Grid</div>
<svg class="a" style="left:547px;top:753px" width="24" height="24" viewBox="0 0 24 24"><rect x="0.5" y="0.5" width="23" height="23" fill="#5aa0f0" stroke="#1a3a8a" stroke-width="1"/>
<defs><linearGradient id="gg" x1="0" y1="0" x2="0" y2="1"><stop offset="0" stop-color="#80c0ff"/><stop offset="0.45" stop-color="#f8f060"/><stop offset="0.7" stop-color="#4040c0"/><stop offset="1" stop-color="#101080"/></linearGradient></defs>
<rect x="1.5" y="1.5" width="14" height="18" fill="url(#gg)"/><path d="M3 3 L9 11 L7 17 L11 19 L13 13 L11 3" fill="#d8d8d8" stroke="#222" stroke-width="0.8"/>
<rect x="16" y="1.5" width="6.5" height="18" fill="#8ac8f8"/><path d="M17.5 3.5 L21 3.5 M17.5 7.5 L21 7.5 M17.5 11.5 L21 11.5 M19 14 L19 18" stroke="#101040" stroke-width="1.6"/>
<rect x="1.5" y="20" width="21" height="3" fill="#5ab0f8"/><path d="M2.5 21.5 L21.5 21.5" stroke="#102060" stroke-width="1.2" stroke-dasharray="1 0.7"/></svg>
<div class="t" style="left:576px;top:756px;color:#e2e2e2">GoatTracker</div>
<svg class="a" style="left:547px;top:783px" width="24" height="24" viewBox="0 0 24 24"><defs><linearGradient id="ghy" x1="0" y1="0" x2="1" y2="1"><stop offset="0" stop-color="#f4f6ff"/><stop offset="1" stop-color="#c0c8e0"/></linearGradient></defs>
<rect x="0.5" y="0.5" width="23" height="23" fill="url(#ghy)" stroke="#7a88c0" stroke-width="0.8"/>
<rect x="3" y="3" width="18" height="13" fill="#2a3a80"/><rect x="7" y="3" width="3" height="4" fill="#dde0f0"/><rect x="7" y="13.6" width="3" height="2.4" fill="#dde0f0"/>
<rect x="11.4" y="5.3" width="8.3" height="9.8" fill="#fff"/><rect x="11.4" y="7.9" width="5.7" height="1" fill="#2a3a80"/><rect x="14.3" y="11.3" width="5.4" height="1" fill="#2a3a80"/>
<g fill="#3a4a88"><circle cx="3.4" cy="19.3" r="0.9" opacity="0.3"/><circle cx="6.6" cy="19.3" r="1" opacity="0.6"/><circle cx="10" cy="19.3" r="1.1"/><circle cx="13.7" cy="19.3" r="1.1"/><circle cx="17.1" cy="19.3" r="1" opacity="0.6"/><circle cx="20.6" cy="19.3" r="0.9" opacity="0.3"/></g></svg>
<div class="t" style="left:576px;top:786px;color:#e2e2e2">Hydrogen</div>
<svg class="a" style="left:547px;top:813px" width="24" height="24" viewBox="0 0 24 24"><defs><linearGradient id="gl" x1="0" y1="0" x2="0" y2="1"><stop offset="0" stop-color="#50f090"/><stop offset="1" stop-color="#20b050"/></linearGradient></defs>
<path d="M0.5 6.5 L12 0.5 L23.5 6.5 L23.5 21 L19 23.5 L16.5 22 L16.5 15.5 L19.5 14 L19.5 8.5 L12 4.5 L4.5 8.5 L4.5 14 L7.5 15.5 L7.5 22 L5 23.5 L0.5 21 Z" fill="url(#gl)" stroke="#1a6a3a" stroke-width="0.6"/></svg>
<div class="t" style="left:576px;top:816px;color:#e2e2e2">LMMS</div>
<svg class="a" style="left:547px;top:843px" width="24" height="24" viewBox="0 0 24 24"><path d="M3.5 9 L12.5 3 L21 8 L12 13 Z" fill="#fafcff" stroke="#3a70c0" stroke-width="0.6"/><path d="M6.5 7 L11.5 4.5 M8 9 L14 6 M11 10.5 L16 8" stroke="#334" stroke-width="0.8"/>
<path d="M3.5 9 L12 13 L12 23 L3.5 19 Z" fill="#2a78d8"/><path d="M12 13 L21 8 L21 18.5 L12 23 Z" fill="#9ad0f8"/><path d="M5 12.5 L5 17 M7 13.5 L7 18 M16 15 L19 13.5 M17.5 14 L17.5 19" stroke="#102040" stroke-width="1.2"/>
<path d="M6 5 L12.5 0.5 L14 1.5" fill="none" stroke="#fff" stroke-width="1"/></svg>
<div class="t" style="left:576px;top:846px;color:#e2e2e2">MilkyTracker</div>
<svg class="a" style="left:547px;top:873px" width="24" height="24" viewBox="0 0 24 24"><rect x="0.5" y="0.5" width="23" height="21" rx="2" fill="#ececec" stroke="#bbb" stroke-width="0.8"/>
<rect x="3" y="6" width="18" height="2.5" rx="1" fill="#888"/><rect x="7.5" y="2" width="9" height="11" rx="1.5" fill="#444" stroke="#222" stroke-width="0.6"/><rect x="10.5" y="4" width="2.5" height="4.5" fill="#e02020"/>
<path d="M3.5 16 L20.5 16" stroke="#555" stroke-width="1.5" stroke-dasharray="0.7 1.5"/></svg>
<div class="t" style="left:576px;top:876px;color:#e2e2e2">Mixxx</div>
<svg class="a" style="left:547px;top:903px" width="24" height="24" viewBox="0 0 24 24"><path d="M3 4 Q7 6 10.5 6 Q16 5 19.5 1 L20.3 9.5 L11 21.5 Q6 15 3 4 Z" fill="#5e5e5e"/>
<path d="M3 4 Q4.5 14 9.5 22" fill="none" stroke="#b89848" stroke-width="1.7"/><path d="M19.8 1 L20.2 9" stroke="#5a3018" stroke-width="1.7"/>
<path d="M20.8 9 L10.5 22" stroke="#b09040" stroke-width="2.8"/><path d="M6.5 19 L11 22 L14.5 22.8" fill="none" stroke="#f0e4b8" stroke-width="1.6"/><path d="M12 22.5 L15 23" stroke="#c06030" stroke-width="1.2"/>
<path d="M2 3.2 Q6 4.5 10.5 5.6 Q15 5 19.8 0.6" fill="none" stroke="#f4ead0" stroke-width="2"/><path d="M3 2.8 Q5.5 2.2 8.5 4.5" fill="none" stroke="#e08850" stroke-width="1.6"/></svg>
<div class="t" style="left:576px;top:906px;color:#e2e2e2">MusE</div>
<svg class="a" style="left:547px;top:933px" width="24" height="24" viewBox="0 0 24 24"><rect x="0" y="9" width="24" height="14" fill="#0a6a0a" stroke="#044004" stroke-width="0.6"/><path d="M1 14 L23 14 M1 18.5 L23 18.5" stroke="#3a9a3a" stroke-width="0.5"/><path d="M4 15 L4 21 M8 15 L8 21 M12 15 L12 21 M16 15 L16 21 M20 15 L20 21" stroke="#2a8a2a" stroke-width="0.5"/>
<text x="12.5" y="12.5" font-size="13" font-weight="bold" fill="#50e050" text-anchor="middle" font-family="Liberation Sans">Q</text></svg>
<div class="t" style="left:576px;top:936px;color:#e2e2e2">QMidiArp</div>
<div class="a" style="left:544px;top:960px;width:200px;height:30px;background:linear-gradient(#525252,#454545);border-top:1px solid #363636;border-bottom:1px solid #3c3c3c"></div>
<svg class="a" style="left:547px;top:963px" width="24" height="24" viewBox="0 0 24 24"><defs><radialGradient id="gqt" cx="0.3" cy="0.55" r="0.7"><stop offset="0" stop-color="#4a3e20"/><stop offset="0.5" stop-color="#8a7a48"/><stop offset="1" stop-color="#d8cca0"/></radialGradient>
<linearGradient id="gqb" x1="0" y1="0" x2="0" y2="1"><stop offset="0" stop-color="#4a3e20"/><stop offset="1" stop-color="#9a8a58"/></linearGradient></defs>
<path d="M3.3 12.6 L3.3 14.2 L7 14.2 L7.5 12 L12 10" fill="none" stroke="#c0b078" stroke-width="1.2"/>
<ellipse cx="15.6" cy="8.6" rx="6" ry="8.2" fill="url(#gqt)" stroke="#d8cc98" stroke-width="0.9" transform="rotate(-22 15.6 8.6)"/>
<path d="M3.5 15.3 L14 15.3 L13.5 20.5 L14.8 22.6 L3 22.6 L3.5 20.5 Z" fill="url(#gqb)"/><circle cx="3.8" cy="20.5" r="0.7" fill="#ddd"/></svg>
<div class="t" style="left:576px;top:966px;color:#e2e2e2">Qtractor</div>
<svg class="a" style="left:547px;top:993px" width="24" height="24" viewBox="0 0 24 24"><path d="M17 3 Q22 8 21.5 8 L16 17" fill="none" stroke="#8a9a20" stroke-width="0.8"/>
<path d="M6 2 Q10 0 13 1.5 Q16.5 0.5 18.8 4.5 Q19 12 17 17 Q13 19.5 8 18 Q4 14 4 11 Q5 5 6 2 Z" fill="#f8c028"/>
<path d="M6 2.5 Q9 1 9.5 4 L9 9 Q6.5 9 6 6 Z" fill="#e03010"/><path d="M13 1.5 Q16.5 0.5 18.5 5 L17.5 9 L14 6 Z" fill="#f06818"/>
<path d="M4 11.3 Q10 7 17.5 2" fill="none" stroke="#f8e8a0" stroke-width="1.4"/><path d="M11 10 Q13 13 12.5 18" fill="#f8f040" stroke="#f8f040" stroke-width="3" opacity="0.7"/>
<path d="M7 16 Q10 17 13.5 19 L12.5 20 L9.5 20 Z" fill="#4a7a10"/><path d="M11 19 L11 23.6" stroke="#3a6a10" stroke-width="2.6"/></svg>
<div class="t" style="left:576px;top:996px;color:#e2e2e2">Rosegarden</div>
<svg class="a" style="left:547px;top:1023px" width="24" height="24" viewBox="0 0 24 24"><rect x="0" y="0" width="24" height="24" fill="#fff"/><text x="0.3" y="10" font-family="Liberation Sans" font-weight="bold" font-size="7" fill="#111" stroke="#111" stroke-width="0.35" textLength="23.4" lengthAdjust="spacingAndGlyphs">SEQ24</text><rect x="0" y="5.8" width="24" height="0.8" fill="#888" opacity="0.5"/></svg>
<div class="t" style="left:576px;top:1026px;color:#e2e2e2">Seq24</div>
<div class="a" style="left:635px;top:978px;width:332px;height:23px;background:#bfbfbf;border:1px solid #a8a8a8"></div>
<div class="t" style="left:639px;top:981px;color:#111">Qtractor est un séquenceur multi-pistes audio/MIDI</div>
<svg class="a" style="left:624px;top:968px" width="14" height="22" viewBox="0 0 14 22"><path d="M1.5 1.5 L1.5 17.5 L5.5 13.5 L8 19.5 L10.5 18.5 L8 12.5 L13 12.5 Z" fill="#fafafa" stroke="#000" stroke-width="1.4" stroke-linejoin="miter"/></svg>

</div></body></html>
